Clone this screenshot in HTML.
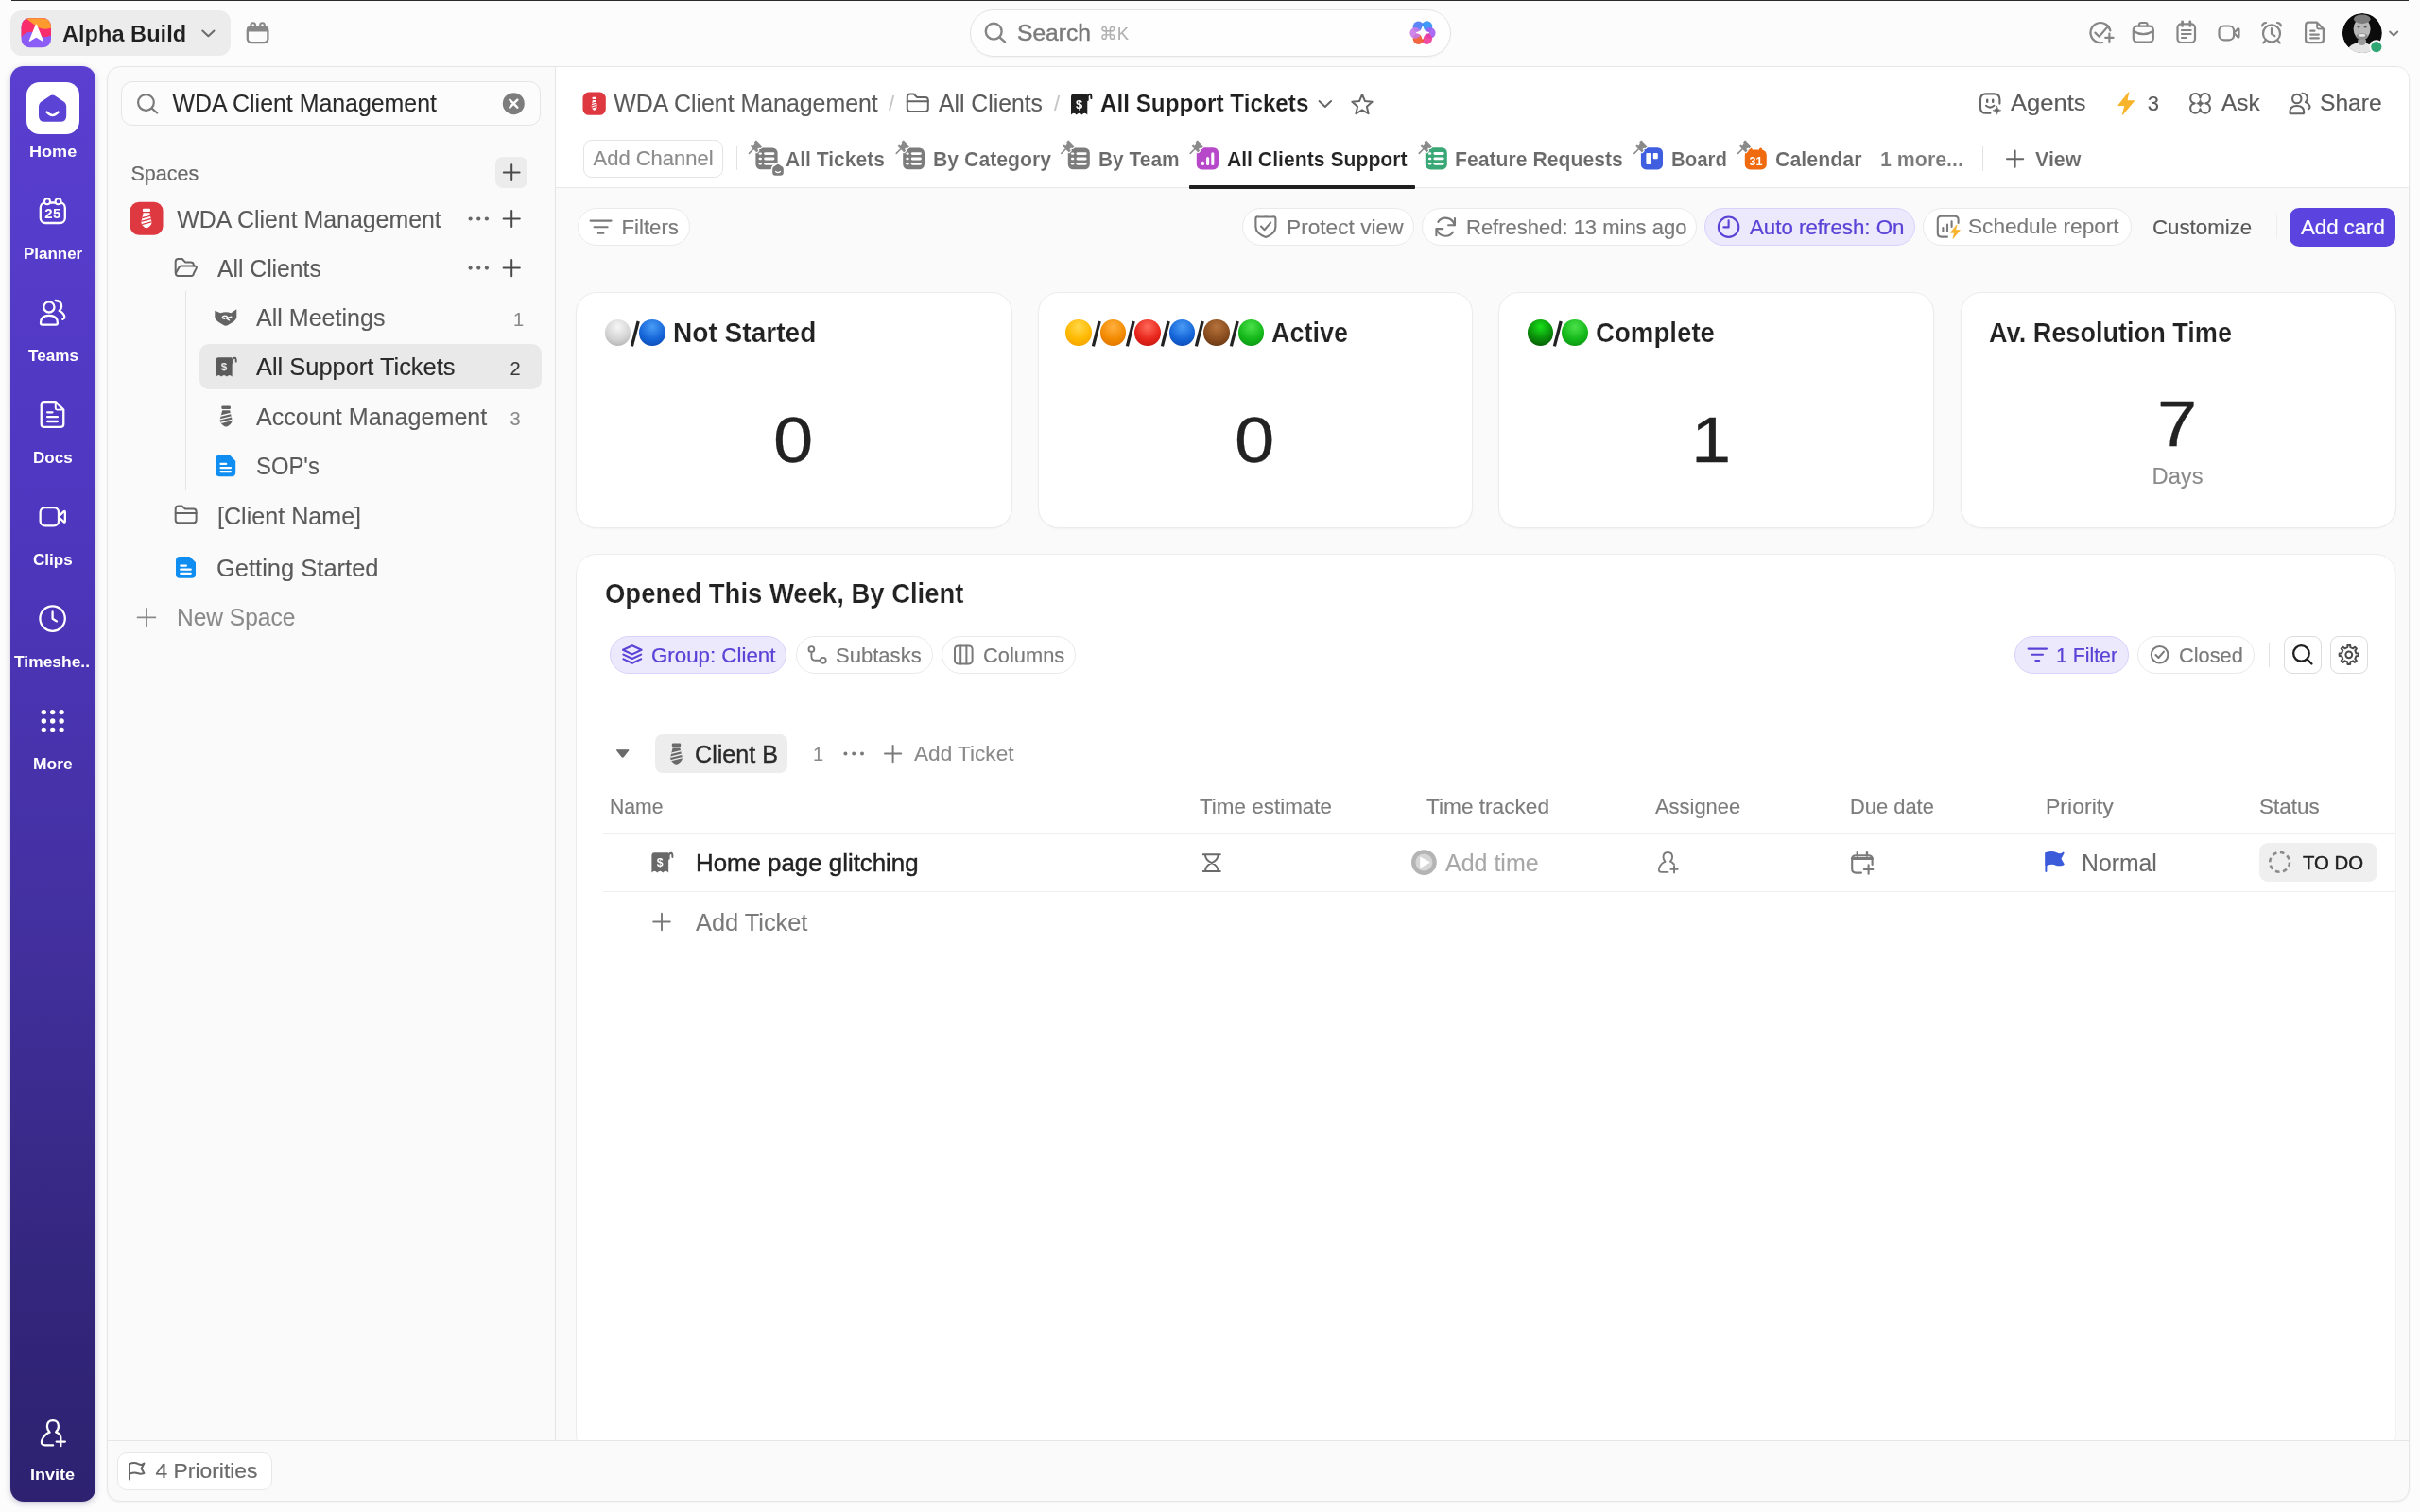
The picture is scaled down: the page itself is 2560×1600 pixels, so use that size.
<!DOCTYPE html><html><head><meta charset="utf-8"><title>ClickUp</title><style>
html,body{margin:0;padding:0;}body{width:2560px;height:1600px;position:relative;overflow:hidden;background:#fcfcfc;font-family:"Liberation Sans", sans-serif;}
.t{font-family:"Liberation Sans", sans-serif;}
</style></head><body><div style="position:absolute;left:0;top:0;width:2560px;height:1600px;will-change:transform;">
<div style="position:absolute;left:12px;top:0px;width:2536px;height:1px;box-sizing:border-box;background:#2a2a2a;"></div>
<div style="position:absolute;left:11px;top:11px;width:233px;height:48px;box-sizing:border-box;background:#ececec;border-radius:12px;"></div>
<div style="position:absolute;left:113px;top:70px;width:2436px;height:1519px;box-sizing:border-box;background:#fafafa;border:1px solid #e6e6e6;border-radius:14px;box-shadow:0 1px 3px rgba(0,0,0,0.05);"></div>
<div style="position:absolute;left:588px;top:71px;width:1960px;height:127px;box-sizing:border-box;background:#ffffff;border-radius:0 13px 0 0;"></div>
<div style="position:absolute;left:588px;top:198px;width:1960px;height:1px;box-sizing:border-box;background:#e9e9e9;"></div>
<div style="position:absolute;left:587px;top:71px;width:1px;height:1453px;box-sizing:border-box;background:#e6e6e6;"></div>
<div style="position:absolute;left:114px;top:1524px;width:2434px;height:1px;box-sizing:border-box;background:#e6e6e6;"></div>
<div style="position:absolute;left:11px;top:70px;width:90px;height:1519px;box-sizing:border-box;background:linear-gradient(180deg,#5a3fd0 0%,#4f37c0 30%,#43309f 60%,#33267c 85%,#2d2170 100%);border-radius:14px;box-shadow:0 2px 6px rgba(40,30,100,0.25);"></div>
<div style="position:absolute;left:28px;top:87px;width:56px;height:55px;box-sizing:border-box;background:#ffffff;border-radius:14px;"></div>
<span class="t" style="position:absolute;left:30.50px;top:151.76px;font-size:17.3px;line-height:17.3px;color:#ffffff;font-weight:700;white-space:pre;letter-spacing:0.000px;display:inline-block;transform-origin:0 50%;transform:scaleX(1.0450);">Home</span>
<span class="t" style="position:absolute;left:24.60px;top:259.76px;font-size:17.3px;line-height:17.3px;color:#ffffff;font-weight:700;white-space:pre;letter-spacing:0.000px;display:inline-block;transform-origin:0 50%;transform:scaleX(0.9812);">Planner</span>
<span class="t" style="position:absolute;left:29.60px;top:367.76px;font-size:17.3px;line-height:17.3px;color:#ffffff;font-weight:700;white-space:pre;letter-spacing:0.000px;display:inline-block;transform-origin:0 50%;transform:scaleX(0.9891);">Teams</span>
<span class="t" style="position:absolute;left:35.00px;top:475.76px;font-size:17.3px;line-height:17.3px;color:#ffffff;font-weight:700;white-space:pre;letter-spacing:0.000px;display:inline-block;transform-origin:0 50%;transform:scaleX(0.9866);">Docs</span>
<span class="t" style="position:absolute;left:35.00px;top:583.76px;font-size:17.3px;line-height:17.3px;color:#ffffff;font-weight:700;white-space:pre;letter-spacing:0.000px;display:inline-block;transform-origin:0 50%;transform:scaleX(0.9870);">Clips</span>
<span class="t" style="position:absolute;left:15.00px;top:691.76px;font-size:17.3px;line-height:17.3px;color:#ffffff;font-weight:700;white-space:pre;letter-spacing:0.000px;display:inline-block;transform-origin:0 50%;transform:scaleX(1.0075);">Timeshe..</span>
<span class="t" style="position:absolute;left:35.00px;top:799.76px;font-size:17.3px;line-height:17.3px;color:#ffffff;font-weight:700;white-space:pre;letter-spacing:0.000px;display:inline-block;transform-origin:0 50%;transform:scaleX(1.0098);">More</span>
<span class="t" style="position:absolute;left:31.70px;top:1552.16px;font-size:17.3px;line-height:17.3px;color:#ffffff;font-weight:700;white-space:pre;letter-spacing:0.000px;display:inline-block;transform-origin:0 50%;transform:scaleX(1.0450);">Invite</span>
<span class="t" style="position:absolute;left:65.60px;top:23.58px;font-size:24.6px;line-height:24.6px;color:#1f1f1f;font-weight:700;white-space:pre;letter-spacing:0.000px;display:inline-block;transform-origin:0 50%;transform:scaleX(0.9596);-webkit-text-stroke:0.12px #ececec;">Alpha Build</span>
<div style="position:absolute;left:1026px;top:10px;width:509px;height:50px;box-sizing:border-box;background:#fefefe;border:1px solid #e3e3e3;border-radius:25px;box-shadow:0 1px 2px rgba(0,0,0,0.04);"></div>
<span class="t" style="position:absolute;left:1076.00px;top:22.56px;font-size:24.62px;line-height:24.62px;color:#7a7a7a;font-weight:400;white-space:pre;letter-spacing:0.000px;-webkit-text-stroke:0.45px #7a7a7a;">Search</span>
<span class="t" style="position:absolute;left:1163.00px;top:27.06px;font-size:18.59px;line-height:18.59px;color:#b0b0b0;font-weight:400;white-space:pre;letter-spacing:0.000px;display:inline-block;transform-origin:0 50%;transform:scaleX(0.9871);-webkit-text-stroke:0.1px #b0b0b0;">⌘K</span>
<div style="position:absolute;left:128px;top:86px;width:444px;height:47px;box-sizing:border-box;background:#fcfcfc;border:1px solid #e5e5e5;border-radius:12px;"></div>
<span class="t" style="position:absolute;left:182.50px;top:97.32px;font-size:24.9px;line-height:24.9px;color:#2a2a2a;font-weight:400;white-space:pre;letter-spacing:0.000px;-webkit-text-stroke:0.1px #2a2a2a;">WDA Client Management</span>
<span class="t" style="position:absolute;left:138.40px;top:172.96px;font-size:21.55px;line-height:21.55px;color:#686868;font-weight:400;white-space:pre;letter-spacing:0.000px;-webkit-text-stroke:0.18px #686868;">Spaces</span>
<div style="position:absolute;left:524px;top:166px;width:34px;height:33px;box-sizing:border-box;background:#ececec;border-radius:8px;"></div>
<span class="t" style="position:absolute;left:187.30px;top:219.52px;font-size:24.9px;line-height:24.9px;color:#5a5a5a;font-weight:400;white-space:pre;letter-spacing:0.000px;-webkit-text-stroke:0.1px #5a5a5a;">WDA Client Management</span>
<span class="t" style="position:absolute;left:229.60px;top:271.72px;font-size:24.9px;line-height:24.9px;color:#5a5a5a;font-weight:400;white-space:pre;letter-spacing:0.000px;display:inline-block;transform-origin:0 50%;transform:scaleX(0.9921);-webkit-text-stroke:0.1px #5a5a5a;">All Clients</span>
<div style="position:absolute;left:155px;top:251px;width:1px;height:377px;box-sizing:border-box;background:#e4e4e4;"></div>
<div style="position:absolute;left:196px;top:308px;width:1px;height:211px;box-sizing:border-box;background:#e4e4e4;"></div>
<span class="t" style="position:absolute;left:271.00px;top:324.12px;font-size:24.9px;line-height:24.9px;color:#5a5a5a;font-weight:400;white-space:pre;letter-spacing:0.000px;display:inline-block;transform-origin:0 50%;transform:scaleX(1.0061);-webkit-text-stroke:0.1px #5a5a5a;">All Meetings</span>
<span class="t" style="position:absolute;left:543.00px;top:328.07px;font-size:20px;line-height:20px;color:#8a8a8a;font-weight:400;white-space:pre;letter-spacing:0.000px;-webkit-text-stroke:0.1px #8a8a8a;">1</span>
<div style="position:absolute;left:211px;top:364px;width:362px;height:48px;box-sizing:border-box;background:#e9e9e9;border-radius:10px;"></div>
<span class="t" style="position:absolute;left:271.00px;top:375.92px;font-size:24.9px;line-height:24.9px;color:#2a2a2a;font-weight:400;white-space:pre;letter-spacing:0.000px;display:inline-block;transform-origin:0 50%;transform:scaleX(1.0211);-webkit-text-stroke:0.15px #2a2a2a;">All Support Tickets</span>
<span class="t" style="position:absolute;left:539.60px;top:379.87px;font-size:20px;line-height:20px;color:#3a3a3a;font-weight:400;white-space:pre;letter-spacing:0.000px;-webkit-text-stroke:0.1px #3a3a3a;">2</span>
<span class="t" style="position:absolute;left:271.00px;top:429.12px;font-size:24.9px;line-height:24.9px;color:#5a5a5a;font-weight:400;white-space:pre;letter-spacing:0.000px;display:inline-block;transform-origin:0 50%;transform:scaleX(1.0089);-webkit-text-stroke:0.1px #5a5a5a;">Account Management</span>
<span class="t" style="position:absolute;left:539.60px;top:433.07px;font-size:20px;line-height:20px;color:#8a8a8a;font-weight:400;white-space:pre;letter-spacing:0.000px;-webkit-text-stroke:0.1px #8a8a8a;">3</span>
<span class="t" style="position:absolute;left:271.00px;top:481.22px;font-size:24.9px;line-height:24.9px;color:#5a5a5a;font-weight:400;white-space:pre;letter-spacing:0.000px;display:inline-block;transform-origin:0 50%;transform:scaleX(0.9575);-webkit-text-stroke:0.1px #5a5a5a;">SOP&#x27;s</span>
<span class="t" style="position:absolute;left:229.60px;top:533.52px;font-size:24.9px;line-height:24.9px;color:#5a5a5a;font-weight:400;white-space:pre;letter-spacing:0.000px;display:inline-block;transform-origin:0 50%;transform:scaleX(1.0087);-webkit-text-stroke:0.1px #5a5a5a;">[Client Name]</span>
<span class="t" style="position:absolute;left:228.80px;top:589.12px;font-size:24.9px;line-height:24.9px;color:#5a5a5a;font-weight:400;white-space:pre;letter-spacing:0.000px;display:inline-block;transform-origin:0 50%;transform:scaleX(1.0244);-webkit-text-stroke:0.1px #5a5a5a;">Getting Started</span>
<span class="t" style="position:absolute;left:187.30px;top:641.12px;font-size:24.9px;line-height:24.9px;color:#8a8a8a;font-weight:400;white-space:pre;letter-spacing:0.000px;display:inline-block;transform-origin:0 50%;transform:scaleX(0.9851);-webkit-text-stroke:0.1px #8a8a8a;">New Space</span>
<div style="position:absolute;left:124px;top:1537px;width:164px;height:40px;box-sizing:border-box;background:#ffffff;border:1px solid #e8e8e8;border-radius:10px;"></div>
<span class="t" style="position:absolute;left:164.50px;top:1544.85px;font-size:22.86px;line-height:22.86px;color:#6a6a6a;font-weight:400;white-space:pre;letter-spacing:0.000px;-webkit-text-stroke:0.18px #6a6a6a;">4 Priorities</span>
<span class="t" style="position:absolute;left:649.30px;top:97.02px;font-size:24.9px;line-height:24.9px;color:#5a5a5a;font-weight:400;white-space:pre;letter-spacing:0.000px;-webkit-text-stroke:0.1px #5a5a5a;">WDA Client Management</span>
<span class="t" style="position:absolute;left:940.00px;top:99.48px;font-size:22px;line-height:22px;color:#c4c4c4;font-weight:400;white-space:pre;letter-spacing:0.000px;-webkit-text-stroke:0.1px #c4c4c4;">/</span>
<span class="t" style="position:absolute;left:993.00px;top:97.02px;font-size:24.9px;line-height:24.9px;color:#5a5a5a;font-weight:400;white-space:pre;letter-spacing:0.000px;display:inline-block;transform-origin:0 50%;transform:scaleX(0.9939);-webkit-text-stroke:0.1px #5a5a5a;">All Clients</span>
<span class="t" style="position:absolute;left:1115.00px;top:99.48px;font-size:22px;line-height:22px;color:#c4c4c4;font-weight:400;white-space:pre;letter-spacing:0.000px;-webkit-text-stroke:0.1px #c4c4c4;">/</span>
<span class="t" style="position:absolute;left:1164.00px;top:97.02px;font-size:24.9px;line-height:24.9px;color:#1f1f1f;font-weight:700;white-space:pre;letter-spacing:0.000px;display:inline-block;transform-origin:0 50%;transform:scaleX(0.9736);-webkit-text-stroke:0.14px #ffffff;">All Support Tickets</span>
<span class="t" style="position:absolute;left:2127.30px;top:97.11px;font-size:24.8px;line-height:24.8px;color:#5a5a5a;font-weight:400;white-space:pre;letter-spacing:0.000px;display:inline-block;transform-origin:0 50%;transform:scaleX(1.0310);-webkit-text-stroke:0.18px #5a5a5a;">Agents</span>
<span class="t" style="position:absolute;left:2271.70px;top:99.48px;font-size:22px;line-height:22px;color:#5a5a5a;font-weight:400;white-space:pre;letter-spacing:0.000px;-webkit-text-stroke:0.18px #5a5a5a;">3</span>
<span class="t" style="position:absolute;left:2349.70px;top:97.11px;font-size:24.8px;line-height:24.8px;color:#5a5a5a;font-weight:400;white-space:pre;letter-spacing:0.000px;display:inline-block;transform-origin:0 50%;transform:scaleX(0.9820);-webkit-text-stroke:0.18px #5a5a5a;">Ask</span>
<span class="t" style="position:absolute;left:2454.00px;top:97.11px;font-size:24.8px;line-height:24.8px;color:#5a5a5a;font-weight:400;white-space:pre;letter-spacing:0.000px;display:inline-block;transform-origin:0 50%;transform:scaleX(0.9929);-webkit-text-stroke:0.18px #5a5a5a;">Share</span>
<div style="position:absolute;left:617px;top:147.6px;width:148px;height:40.70000000000002px;box-sizing:border-box;background:#ffffff;border:1px solid #e4e4e4;border-radius:9px;"></div>
<span class="t" style="position:absolute;left:627.60px;top:157.21px;font-size:21.96px;line-height:21.96px;color:#8c8c8c;font-weight:400;white-space:pre;letter-spacing:0.000px;-webkit-text-stroke:0.18px #8c8c8c;">Add Channel</span>
<div style="position:absolute;left:779px;top:155px;width:1px;height:25px;box-sizing:border-box;background:#e2e2e2;"></div>
<span class="t" style="position:absolute;left:831.30px;top:157.85px;font-size:21.2px;line-height:21.2px;color:#6a6a6a;font-weight:700;white-space:pre;letter-spacing:0.000px;display:inline-block;transform-origin:0 50%;transform:scaleX(0.9942);-webkit-text-stroke:0.14px #ffffff;">All Tickets</span>
<span class="t" style="position:absolute;left:986.60px;top:157.85px;font-size:21.2px;line-height:21.2px;color:#6a6a6a;font-weight:700;white-space:pre;letter-spacing:0.000px;display:inline-block;transform-origin:0 50%;transform:scaleX(1.0023);-webkit-text-stroke:0.14px #ffffff;">By Category</span>
<span class="t" style="position:absolute;left:1162.00px;top:157.85px;font-size:21.2px;line-height:21.2px;color:#6a6a6a;font-weight:700;white-space:pre;letter-spacing:0.000px;display:inline-block;transform-origin:0 50%;transform:scaleX(0.9867);-webkit-text-stroke:0.14px #ffffff;">By Team</span>
<span class="t" style="position:absolute;left:1297.90px;top:157.85px;font-size:21.2px;line-height:21.2px;color:#232323;font-weight:700;white-space:pre;letter-spacing:0.000px;-webkit-text-stroke:0.14px #ffffff;">All Clients Support</span>
<div style="position:absolute;left:1258px;top:196px;width:239px;height:4px;box-sizing:border-box;background:#1f1f1f;border-radius:1px;"></div>
<span class="t" style="position:absolute;left:1539.00px;top:157.85px;font-size:21.2px;line-height:21.2px;color:#6a6a6a;font-weight:700;white-space:pre;letter-spacing:0.000px;-webkit-text-stroke:0.14px #ffffff;">Feature Requests</span>
<span class="t" style="position:absolute;left:1768.00px;top:157.85px;font-size:21.2px;line-height:21.2px;color:#6a6a6a;font-weight:700;white-space:pre;letter-spacing:0.000px;display:inline-block;transform-origin:0 50%;transform:scaleX(0.9638);-webkit-text-stroke:0.14px #ffffff;">Board</span>
<span class="t" style="position:absolute;left:1877.50px;top:157.85px;font-size:21.2px;line-height:21.2px;color:#6a6a6a;font-weight:700;white-space:pre;letter-spacing:0.000px;display:inline-block;transform-origin:0 50%;transform:scaleX(1.0091);-webkit-text-stroke:0.14px #ffffff;">Calendar</span>
<span class="t" style="position:absolute;left:1989.00px;top:157.85px;font-size:21.2px;line-height:21.2px;color:#7a7a7a;font-weight:700;white-space:pre;letter-spacing:0.000px;display:inline-block;transform-origin:0 50%;transform:scaleX(1.0087);-webkit-text-stroke:0.14px #ffffff;">1 more...</span>
<div style="position:absolute;left:2097px;top:155px;width:1px;height:26px;box-sizing:border-box;background:#e2e2e2;"></div>
<span class="t" style="position:absolute;left:2153.30px;top:157.85px;font-size:21.2px;line-height:21.2px;color:#6a6a6a;font-weight:700;white-space:pre;letter-spacing:0.000px;display:inline-block;transform-origin:0 50%;transform:scaleX(1.0103);-webkit-text-stroke:0.14px #ffffff;">View</span>
<div style="position:absolute;left:611px;top:220px;width:119px;height:40px;box-sizing:border-box;background:#ffffff;border:1.5px solid #eaeaea;border-radius:20px;"></div>
<span class="t" style="position:absolute;left:657.50px;top:229.81px;font-size:22.2px;line-height:22.2px;color:#7a7a7a;font-weight:400;white-space:pre;letter-spacing:0.000px;-webkit-text-stroke:0.18px #7a7a7a;">Filters</span>
<div style="position:absolute;left:1314px;top:220px;width:182px;height:40px;box-sizing:border-box;background:#ffffff;border:1.5px solid #eaeaea;border-radius:20px;"></div>
<span class="t" style="position:absolute;left:1360.80px;top:229.81px;font-size:22.2px;line-height:22.2px;color:#7a7a7a;font-weight:400;white-space:pre;letter-spacing:0.000px;display:inline-block;transform-origin:0 50%;transform:scaleX(1.0228);-webkit-text-stroke:0.18px #7a7a7a;">Protect view</span>
<div style="position:absolute;left:1504px;top:220px;width:291px;height:40px;box-sizing:border-box;background:#ffffff;border:1.5px solid #eaeaea;border-radius:20px;"></div>
<span class="t" style="position:absolute;left:1550.50px;top:229.81px;font-size:22.2px;line-height:22.2px;color:#7a7a7a;font-weight:400;white-space:pre;letter-spacing:0.000px;display:inline-block;transform-origin:0 50%;transform:scaleX(0.9908);-webkit-text-stroke:0.18px #7a7a7a;">Refreshed: 13 mins ago</span>
<div style="position:absolute;left:1803px;top:220px;width:223px;height:40px;box-sizing:border-box;background:#ece9fd;border:1.5px solid #d8d2fb;border-radius:20px;"></div>
<span class="t" style="position:absolute;left:1850.60px;top:229.81px;font-size:22.2px;line-height:22.2px;color:#5a42d6;font-weight:400;white-space:pre;letter-spacing:0.000px;display:inline-block;transform-origin:0 50%;transform:scaleX(1.0037);-webkit-text-stroke:0.24px #5a42d6;">Auto refresh: On</span>
<div style="position:absolute;left:2034px;top:220px;width:221px;height:40px;box-sizing:border-box;background:#ffffff;border:1.5px solid #eaeaea;border-radius:20px;"></div>
<span class="t" style="position:absolute;left:2082.40px;top:229.21px;font-size:22.2px;line-height:22.2px;color:#7a7a7a;font-weight:400;white-space:pre;letter-spacing:0.000px;display:inline-block;transform-origin:0 50%;transform:scaleX(1.0188);-webkit-text-stroke:0.18px #7a7a7a;">Schedule report</span>
<span class="t" style="position:absolute;left:2276.60px;top:229.81px;font-size:22.2px;line-height:22.2px;color:#5a5a5a;font-weight:400;white-space:pre;letter-spacing:0.000px;display:inline-block;transform-origin:0 50%;transform:scaleX(1.0037);-webkit-text-stroke:0.18px #5a5a5a;">Customize</span>
<div style="position:absolute;left:2408px;top:228px;width:1px;height:25px;box-sizing:border-box;background:#eeeeee;"></div>
<div style="position:absolute;left:2422px;top:220px;width:112px;height:41px;box-sizing:border-box;background:#5b43e0;border-radius:10px;"></div>
<span class="t" style="position:absolute;left:2434.00px;top:229.81px;font-size:22.2px;line-height:22.2px;color:#ffffff;font-weight:400;white-space:pre;letter-spacing:0.000px;-webkit-text-stroke:0.21px #ffffff;">Add card</span>
<div style="position:absolute;left:609px;top:309px;width:462px;height:250px;box-sizing:border-box;background:#ffffff;border:1px solid #ececec;border-radius:22px;box-shadow:0 1px 2px rgba(0,0,0,0.035);"></div>
<div style="position:absolute;left:1097.7px;top:309px;width:460.29999999999995px;height:250px;box-sizing:border-box;background:#ffffff;border:1px solid #ececec;border-radius:22px;box-shadow:0 1px 2px rgba(0,0,0,0.035);"></div>
<div style="position:absolute;left:1585px;top:309px;width:461px;height:250px;box-sizing:border-box;background:#ffffff;border:1px solid #ececec;border-radius:22px;box-shadow:0 1px 2px rgba(0,0,0,0.035);"></div>
<div style="position:absolute;left:2073.5px;top:309px;width:461.0px;height:250px;box-sizing:border-box;background:#ffffff;border:1px solid #ececec;border-radius:22px;box-shadow:0 1px 2px rgba(0,0,0,0.035);"></div>
<div style="position:absolute;left:639.6px;top:338px;width:27.5px;height:27.5px;border-radius:50%;background:radial-gradient(circle at 50% 28%,#f6f6f6 0%,#d4d4d4 55%,#a8a8a8 100%);"></div>
<svg style="position:absolute;left:665.1px;top:336px" width="14" height="34" viewBox="0 0 14 34"><path d="M3.4 30.4L10.2 4" stroke="#222" stroke-width="3.3" fill="none"/></svg>
<div style="position:absolute;left:676.0500000000001px;top:338px;width:27.5px;height:27.5px;border-radius:50%;background:radial-gradient(circle at 50% 28%,#4a9cf5 0%,#1565d8 55%,#0a45a8 100%);"></div>
<span class="t" style="position:absolute;left:711.50px;top:337.85px;font-size:29.0px;line-height:29.0px;color:#222222;font-weight:700;white-space:pre;letter-spacing:0.000px;display:inline-block;transform-origin:0 50%;transform:scaleX(0.9687);-webkit-text-stroke:0.2px #ffffff;">Not Started</span>
<div style="position:absolute;left:1127.4px;top:338px;width:27.5px;height:27.5px;border-radius:50%;background:radial-gradient(circle at 50% 28%,#ffd84a 0%,#ffb800 55%,#f09a00 100%);"></div>
<svg style="position:absolute;left:1152.9px;top:336px" width="14" height="34" viewBox="0 0 14 34"><path d="M3.4 30.4L10.2 4" stroke="#222" stroke-width="3.3" fill="none"/></svg>
<div style="position:absolute;left:1163.8500000000001px;top:338px;width:27.5px;height:27.5px;border-radius:50%;background:radial-gradient(circle at 50% 28%,#ffb040 0%,#f28a00 55%,#d96c00 100%);"></div>
<svg style="position:absolute;left:1189.3500000000001px;top:336px" width="14" height="34" viewBox="0 0 14 34"><path d="M3.4 30.4L10.2 4" stroke="#222" stroke-width="3.3" fill="none"/></svg>
<div style="position:absolute;left:1200.3000000000002px;top:338px;width:27.5px;height:27.5px;border-radius:50%;background:radial-gradient(circle at 50% 28%,#ff6a5a 0%,#e8261c 55%,#b81410 100%);"></div>
<svg style="position:absolute;left:1225.8000000000002px;top:336px" width="14" height="34" viewBox="0 0 14 34"><path d="M3.4 30.4L10.2 4" stroke="#222" stroke-width="3.3" fill="none"/></svg>
<div style="position:absolute;left:1236.75px;top:338px;width:27.5px;height:27.5px;border-radius:50%;background:radial-gradient(circle at 50% 28%,#4a9cf5 0%,#1565d8 55%,#0a45a8 100%);"></div>
<svg style="position:absolute;left:1262.25px;top:336px" width="14" height="34" viewBox="0 0 14 34"><path d="M3.4 30.4L10.2 4" stroke="#222" stroke-width="3.3" fill="none"/></svg>
<div style="position:absolute;left:1273.2px;top:338px;width:27.5px;height:27.5px;border-radius:50%;background:radial-gradient(circle at 50% 28%,#b5723c 0%,#8a4d1e 55%,#5c3010 100%);"></div>
<svg style="position:absolute;left:1298.7px;top:336px" width="14" height="34" viewBox="0 0 14 34"><path d="M3.4 30.4L10.2 4" stroke="#222" stroke-width="3.3" fill="none"/></svg>
<div style="position:absolute;left:1309.65px;top:338px;width:27.5px;height:27.5px;border-radius:50%;background:radial-gradient(circle at 50% 28%,#4be04a 0%,#14b81a 55%,#0a8a12 100%);"></div>
<span class="t" style="position:absolute;left:1345.00px;top:337.85px;font-size:29.0px;line-height:29.0px;color:#222222;font-weight:700;white-space:pre;letter-spacing:0.000px;display:inline-block;transform-origin:0 50%;transform:scaleX(0.9305);-webkit-text-stroke:0.2px #ffffff;">Active</span>
<div style="position:absolute;left:1615.6px;top:338px;width:27.5px;height:27.5px;border-radius:50%;background:radial-gradient(circle at 50% 28%,#18e018 0%,#0a8a0a 55%,#044a04 100%);"></div>
<svg style="position:absolute;left:1641.1px;top:336px" width="14" height="34" viewBox="0 0 14 34"><path d="M3.4 30.4L10.2 4" stroke="#222" stroke-width="3.3" fill="none"/></svg>
<div style="position:absolute;left:1652.05px;top:338px;width:27.5px;height:27.5px;border-radius:50%;background:radial-gradient(circle at 50% 28%,#4be04a 0%,#14b81a 55%,#0a8a12 100%);"></div>
<span class="t" style="position:absolute;left:1687.80px;top:337.85px;font-size:29.0px;line-height:29.0px;color:#222222;font-weight:700;white-space:pre;letter-spacing:0.000px;display:inline-block;transform-origin:0 50%;transform:scaleX(0.9535);-webkit-text-stroke:0.2px #ffffff;">Complete</span>
<span class="t" style="position:absolute;left:2104.00px;top:337.85px;font-size:29.0px;line-height:29.0px;color:#222222;font-weight:700;white-space:pre;letter-spacing:0.000px;display:inline-block;transform-origin:0 50%;transform:scaleX(0.9345);-webkit-text-stroke:0.2px #ffffff;">Av. Resolution Time</span>
<span class="t" style="position:absolute;left:818.49px;top:430.69px;font-size:69px;line-height:69px;color:#222222;font-weight:400;white-space:pre;letter-spacing:0.000px;display:inline-block;transform-origin:0 50%;transform:scaleX(1.1000);-webkit-text-stroke:0.3px #222222;">0</span>
<span class="t" style="position:absolute;left:1306.49px;top:430.69px;font-size:69px;line-height:69px;color:#222222;font-weight:400;white-space:pre;letter-spacing:0.000px;display:inline-block;transform-origin:0 50%;transform:scaleX(1.1000);-webkit-text-stroke:0.3px #222222;">0</span>
<span class="t" style="position:absolute;left:1789.09px;top:430.69px;font-size:69px;line-height:69px;color:#222222;font-weight:400;white-space:pre;letter-spacing:0.000px;display:inline-block;transform-origin:0 50%;transform:scaleX(1.1000);-webkit-text-stroke:0.3px #222222;">1</span>
<span class="t" style="position:absolute;left:2282.29px;top:414.19px;font-size:69px;line-height:69px;color:#222222;font-weight:400;white-space:pre;letter-spacing:0.000px;display:inline-block;transform-origin:0 50%;transform:scaleX(1.1000);-webkit-text-stroke:0.3px #222222;">7</span>
<span class="t" style="position:absolute;left:2276.50px;top:493.00px;font-size:23.74px;line-height:23.74px;color:#8a8a8a;font-weight:400;white-space:pre;letter-spacing:0.000px;-webkit-text-stroke:0.1px #8a8a8a;">Days</span>
<div style="position:absolute;left:609px;top:586px;width:1925.5px;height:954px;box-sizing:border-box;background:#ffffff;border:1px solid #ececec;border-radius:22px;clip-path:inset(0 0 16px 0);"></div>
<span class="t" style="position:absolute;left:640.00px;top:614.25px;font-size:29.0px;line-height:29.0px;color:#222222;font-weight:700;white-space:pre;letter-spacing:0.000px;display:inline-block;transform-origin:0 50%;transform:scaleX(0.9468);-webkit-text-stroke:0.2px #ffffff;">Opened This Week, By Client</span>
<div style="position:absolute;left:645px;top:673px;width:187px;height:40px;box-sizing:border-box;background:#ece9fd;border:1.5px solid #d8d2fb;border-radius:20px;"></div>
<span class="t" style="position:absolute;left:688.60px;top:682.91px;font-size:22.2px;line-height:22.2px;color:#5a42d6;font-weight:400;white-space:pre;letter-spacing:0.000px;display:inline-block;transform-origin:0 50%;transform:scaleX(1.0051);-webkit-text-stroke:0.24px #5a42d6;">Group: Client</span>
<div style="position:absolute;left:841.5px;top:673px;width:145.5px;height:40px;box-sizing:border-box;background:#ffffff;border:1.5px solid #eaeaea;border-radius:20px;"></div>
<span class="t" style="position:absolute;left:884.30px;top:682.91px;font-size:22.2px;line-height:22.2px;color:#7a7a7a;font-weight:400;white-space:pre;letter-spacing:0.000px;display:inline-block;transform-origin:0 50%;transform:scaleX(0.9938);-webkit-text-stroke:0.18px #7a7a7a;">Subtasks</span>
<div style="position:absolute;left:996px;top:673px;width:142px;height:40px;box-sizing:border-box;background:#ffffff;border:1.5px solid #eaeaea;border-radius:20px;"></div>
<span class="t" style="position:absolute;left:1039.60px;top:682.91px;font-size:22.2px;line-height:22.2px;color:#7a7a7a;font-weight:400;white-space:pre;letter-spacing:0.000px;display:inline-block;transform-origin:0 50%;transform:scaleX(0.9856);-webkit-text-stroke:0.18px #7a7a7a;">Columns</span>
<div style="position:absolute;left:2131.4px;top:673px;width:120.59999999999991px;height:40px;box-sizing:border-box;background:#ece9fd;border:1.5px solid #d8d2fb;border-radius:20px;"></div>
<span class="t" style="position:absolute;left:2175.00px;top:682.91px;font-size:22.2px;line-height:22.2px;color:#5a42d6;font-weight:400;white-space:pre;letter-spacing:0.000px;display:inline-block;transform-origin:0 50%;transform:scaleX(0.9585);-webkit-text-stroke:0.24px #5a42d6;">1 Filter</span>
<div style="position:absolute;left:2261.3px;top:673px;width:123.69999999999982px;height:40px;box-sizing:border-box;background:#ffffff;border:1.5px solid #eaeaea;border-radius:20px;"></div>
<span class="t" style="position:absolute;left:2304.80px;top:682.91px;font-size:22.2px;line-height:22.2px;color:#7a7a7a;font-weight:400;white-space:pre;letter-spacing:0.000px;display:inline-block;transform-origin:0 50%;transform:scaleX(0.9815);-webkit-text-stroke:0.18px #7a7a7a;">Closed</span>
<div style="position:absolute;left:2400px;top:680px;width:1px;height:26px;box-sizing:border-box;background:#e2e2e2;"></div>
<div style="position:absolute;left:2416px;top:673px;width:40px;height:40px;box-sizing:border-box;background:#ffffff;border:1px solid #dcdcdc;border-radius:9px;"></div>
<div style="position:absolute;left:2464.5px;top:673px;width:40.5px;height:40px;box-sizing:border-box;background:#ffffff;border:1px solid #dcdcdc;border-radius:9px;"></div>
<div style="position:absolute;left:693px;top:777px;width:140px;height:41px;box-sizing:border-box;background:#ededed;border-radius:8px;"></div>
<span class="t" style="position:absolute;left:734.60px;top:785.54px;font-size:25.0px;line-height:25.0px;color:#2a2a2a;font-weight:400;white-space:pre;letter-spacing:0.000px;display:inline-block;transform-origin:0 50%;transform:scaleX(1.0052);-webkit-text-stroke:0.4px #2a2a2a;">Client B</span>
<span class="t" style="position:absolute;left:860.00px;top:788.47px;font-size:20px;line-height:20px;color:#8a8a8a;font-weight:400;white-space:pre;letter-spacing:0.000px;-webkit-text-stroke:0.1px #8a8a8a;">1</span>
<span class="t" style="position:absolute;left:967.00px;top:787.24px;font-size:22.4px;line-height:22.4px;color:#8a8a8a;font-weight:400;white-space:pre;letter-spacing:0.000px;display:inline-block;transform-origin:0 50%;transform:scaleX(1.0091);-webkit-text-stroke:0.12px #8a8a8a;">Add Ticket</span>
<span class="t" style="position:absolute;left:645.30px;top:842.81px;font-size:22.2px;line-height:22.2px;color:#7c7c7c;font-weight:400;white-space:pre;letter-spacing:0.000px;display:inline-block;transform-origin:0 50%;transform:scaleX(0.9550);-webkit-text-stroke:0.15px #7c7c7c;">Name</span>
<span class="t" style="position:absolute;left:1269.00px;top:842.81px;font-size:22.2px;line-height:22.2px;color:#7c7c7c;font-weight:400;white-space:pre;letter-spacing:0.000px;display:inline-block;transform-origin:0 50%;transform:scaleX(1.0108);-webkit-text-stroke:0.15px #7c7c7c;">Time estimate</span>
<span class="t" style="position:absolute;left:1509.00px;top:842.81px;font-size:22.2px;line-height:22.2px;color:#7c7c7c;font-weight:400;white-space:pre;letter-spacing:0.000px;display:inline-block;transform-origin:0 50%;transform:scaleX(1.0204);-webkit-text-stroke:0.15px #7c7c7c;">Time tracked</span>
<span class="t" style="position:absolute;left:1751.30px;top:842.81px;font-size:22.2px;line-height:22.2px;color:#7c7c7c;font-weight:400;white-space:pre;letter-spacing:0.000px;display:inline-block;transform-origin:0 50%;transform:scaleX(0.9882);-webkit-text-stroke:0.15px #7c7c7c;">Assignee</span>
<span class="t" style="position:absolute;left:1956.50px;top:842.81px;font-size:22.2px;line-height:22.2px;color:#7c7c7c;font-weight:400;white-space:pre;letter-spacing:0.000px;display:inline-block;transform-origin:0 50%;transform:scaleX(0.9871);-webkit-text-stroke:0.15px #7c7c7c;">Due date</span>
<span class="t" style="position:absolute;left:2163.70px;top:842.81px;font-size:22.2px;line-height:22.2px;color:#7c7c7c;font-weight:400;white-space:pre;letter-spacing:0.000px;display:inline-block;transform-origin:0 50%;transform:scaleX(1.0384);-webkit-text-stroke:0.15px #7c7c7c;">Priority</span>
<span class="t" style="position:absolute;left:2390.00px;top:842.81px;font-size:22.2px;line-height:22.2px;color:#7c7c7c;font-weight:400;white-space:pre;letter-spacing:0.000px;display:inline-block;transform-origin:0 50%;transform:scaleX(1.0110);-webkit-text-stroke:0.15px #7c7c7c;">Status</span>
<div style="position:absolute;left:638px;top:881.5px;width:1896px;height:1.0px;box-sizing:border-box;background:#efefef;"></div>
<div style="position:absolute;left:638px;top:942.6px;width:1896px;height:1.0px;box-sizing:border-box;background:#efefef;"></div>
<span class="t" style="position:absolute;left:736.00px;top:901.34px;font-size:25.0px;line-height:25.0px;color:#222222;font-weight:400;white-space:pre;letter-spacing:0.000px;display:inline-block;transform-origin:0 50%;transform:scaleX(1.0337);-webkit-text-stroke:0.42px #222222;">Home page glitching</span>
<span class="t" style="position:absolute;left:1529.00px;top:900.54px;font-size:25.0px;line-height:25.0px;color:#a8a8a8;font-weight:400;white-space:pre;letter-spacing:0.000px;-webkit-text-stroke:0.1px #a8a8a8;">Add time</span>
<span class="t" style="position:absolute;left:2202.00px;top:900.54px;font-size:25.0px;line-height:25.0px;color:#6a6a6a;font-weight:400;white-space:pre;letter-spacing:0.000px;display:inline-block;transform-origin:0 50%;transform:scaleX(0.9903);-webkit-text-stroke:0.1px #6a6a6a;">Normal</span>
<div style="position:absolute;left:2389.5px;top:892px;width:125.0px;height:41px;box-sizing:border-box;background:#efefef;border-radius:9px;"></div>
<span class="t" style="position:absolute;left:2436.00px;top:903.49px;font-size:20.33px;line-height:20.33px;color:#222222;font-weight:400;white-space:pre;letter-spacing:0.000px;-webkit-text-stroke:0.45px #222222;">TO DO</span>
<span class="t" style="position:absolute;left:736.00px;top:964.04px;font-size:25.0px;line-height:25.0px;color:#7a7a7a;font-weight:400;white-space:pre;letter-spacing:0.000px;display:inline-block;transform-origin:0 50%;transform:scaleX(1.0143);-webkit-text-stroke:0.1px #7a7a7a;">Add Ticket</span>
<svg style="position:absolute;left:0;top:0" width="2560" height="1600" viewBox="0 0 2560 1600"><defs><clipPath id="logoclip"><rect x="22.6" y="19.3" width="31.4" height="31" rx="8.5"/></clipPath></defs><g clip-path="url(#logoclip)"><rect x="22.00" y="19.00" width="33.00" height="32.00" rx="0" fill="#8b5cf6" /><path d="M22 19H55V37Q46 42 38 36T22 40Z" fill="#f92d6b" /><path d="M27 19H55V29Q46 33 39 28T27 19Z" fill="#ff9a2e" /></g><path d="M38.3 26L45.3 43.2L38.3 39L31.3 43.2Z" fill="#ffffff" stroke="#ffffff" stroke-width="1.2" stroke-linecap="round" stroke-linejoin="round" /><path d="M214.30 32.50L220.40 38.20L226.50 32.50" fill="none" stroke="#6a6a6a" stroke-width="2" stroke-linecap="round" stroke-linejoin="round" /><rect x="261.80" y="28.20" width="21.60" height="17.00" rx="4.2" fill="none" stroke="#888888" stroke-width="2.3" stroke-linejoin="round" /><path d="M262 29.4H283.2V32.6H262Z" fill="#888888" stroke="#888888" stroke-width="1.6" stroke-linecap="round" stroke-linejoin="round" /><path d="M265.4 28V26.6A2.3 2.3 0 0 1 270 26.6V28M275.2 28V26.6A2.3 2.3 0 0 1 279.8 26.6V28" fill="none" stroke="#888888" stroke-width="2.1" stroke-linecap="round" stroke-linejoin="round" /><path d="M55.6 100.4Q56.6 100.4 57.6 101L67 107.2Q70.2 109.2 70.2 113V122.5Q70.2 128.8 64 128.8H47.2Q41 128.8 41 122.5V113Q41 109.2 44.2 107.2L53.6 101Q54.6 100.4 55.6 100.4Z" fill="#5b43d6" /><path d="M49.6 118.6Q55.6 125.2 61.6 118.6" fill="none" stroke="#ffffff" stroke-width="2.5" stroke-linecap="round" stroke-linejoin="round" /><rect x="42.80" y="214.50" width="26.00" height="21.50" rx="5.2" fill="none" stroke="#ffffff" stroke-width="2.3" stroke-linejoin="round" /><circle cx="50.00" cy="213.30" r="3.00" fill="#5840cc" stroke="#ffffff" stroke-width="2" /><circle cx="61.60" cy="213.30" r="3.00" fill="#5840cc" stroke="#ffffff" stroke-width="2" /><text x="55.90" y="231.20" font-family='"Liberation Sans", sans-serif' font-size="15" font-weight="700" fill="#ffffff" text-anchor="middle" letter-spacing="0.3">25</text><g transform="translate(41.70,316.60) scale(1.0000)" ><circle cx="10.20" cy="8.30" r="5.60" fill="none" stroke="#ffffff" stroke-width="2.3" /><path d="M1.3 25.2Q1.3 17.2 10.2 17.2Q19.2 17.2 19.2 25.2Q19.2 27 17.4 27H3.1Q1.3 27 1.3 25.2Z" fill="none" stroke="#ffffff" stroke-width="2.3" stroke-linecap="round" stroke-linejoin="round" /><path d="M17 1.4Q23.2 1.6 23.4 7.6Q23.4 10.6 21 12.4Q24.4 13.4 26.2 17.2Q27.4 20.4 24.6 21.2" fill="none" stroke="#ffffff" stroke-width="2.3" stroke-linecap="round" stroke-linejoin="round" /></g><path d="M46.95 425.15H58.79L67.25 433.60999999999996V448.65000000000003Q67.25 451.85 64.05 451.85H46.95Q43.75 451.85 43.75 448.65000000000003V428.34999999999997Q43.75 425.15 46.95 425.15Z" fill="none" stroke="#ffffff" stroke-width="2.3" stroke-linecap="round" stroke-linejoin="round" /><path d="M58.79 425.65V432.10999999999996Q58.79 433.60999999999996 60.29 433.60999999999996H66.75" fill="none" stroke="#ffffff" stroke-width="1.9549999999999998" stroke-linecap="round" stroke-linejoin="round" /><path d="M50.095 436.364H55.5M50.095 441.17H60.905M50.095 445.976H60.905" fill="none" stroke="#ffffff" stroke-width="2.3" stroke-linecap="round" stroke-linejoin="round" /><rect x="42.65" y="537.15" width="19.37" height="19.30" rx="5" fill="none" stroke="#ffffff" stroke-width="2.3" stroke-linejoin="round" /><path d="M63.519999999999996 545.072L67.64999999999999 541.184Q68.85 540.32 68.85 542.48V551.12Q68.85 553.28 67.64999999999999 552.416L63.519999999999996 548.528" fill="none" stroke="#ffffff" stroke-width="2.3" stroke-linecap="round" stroke-linejoin="round" /><circle cx="55.60" cy="654.60" r="13.20" fill="none" stroke="#ffffff" stroke-width="2.3" /><path d="M55.6 647.5V654.8L60 657.4" fill="none" stroke="#ffffff" stroke-width="2.3" stroke-linecap="round" stroke-linejoin="round" /><circle cx="46.30" cy="753.60" r="2.70" fill="#ffffff" /><circle cx="55.70" cy="753.60" r="2.70" fill="#ffffff" /><circle cx="65.10" cy="753.60" r="2.70" fill="#ffffff" /><circle cx="46.30" cy="763.00" r="2.70" fill="#ffffff" /><circle cx="55.70" cy="763.00" r="2.70" fill="#ffffff" /><circle cx="65.10" cy="763.00" r="2.70" fill="#ffffff" /><circle cx="46.30" cy="772.40" r="2.70" fill="#ffffff" /><circle cx="55.70" cy="772.40" r="2.70" fill="#ffffff" /><circle cx="65.10" cy="772.40" r="2.70" fill="#ffffff" /><g transform="translate(42.50,1502.00) scale(1.0000)" ><path d="M13.4 1.2Q19.4 1.2 19.4 7.6Q19.4 11.2 16.6 13.4Q19.6 14.4 21.6 17" fill="none" stroke="#ffffff" stroke-width="2.3" stroke-linecap="round" stroke-linejoin="round" /><path d="M13.4 1.2Q7.4 1.2 7.4 7.6Q7.4 11.2 10 13.6Q4.6 15.4 2 21.6Q0 27.2 5.4 27.4H13.6" fill="none" stroke="#ffffff" stroke-width="2.3" stroke-linecap="round" stroke-linejoin="round" /><path d="M17.2 23.6H26.4M21.8 19V28.2" fill="none" stroke="#ffffff" stroke-width="2.3" stroke-linecap="round" stroke-linejoin="round" /></g><circle cx="154.45" cy="108.45" r="8.35" fill="none" stroke="#7a7a7a" stroke-width="2.2" /><path d="M160.65 114.65L166.20 119.50" fill="none" stroke="#7a7a7a" stroke-width="2.2" stroke-linecap="round" stroke-linejoin="round" /><circle cx="543.30" cy="109.70" r="11.50" fill="#7d7d7d" /><path d="M539.3 105.7L547.3 113.7M547.3 105.7L539.3 113.7" fill="none" stroke="#ffffff" stroke-width="2.4" stroke-linecap="round" stroke-linejoin="round" /><path d="M532.80 182.60H549.60M541.20 174.20V191.00" fill="none" stroke="#4a4a4a" stroke-width="2" stroke-linecap="round" stroke-linejoin="round" /><rect x="137.60" y="213.80" width="34.90" height="34.90" rx="9.5" fill="#de3841" /><rect x="150.88" y="220.80" width="8.14" height="3.30" rx="1.1329999999999998" fill="#ffffff" /><clipPath id="tie1493_2208"><path d="M151.56 225.33200000000002H158.33999999999997L160.374 234.39600000000002Q161.052 237.28 157.43599999999998 240.16400000000002Q154.95 242.43 152.464 240.16400000000002Q148.848 237.28 149.526 234.39600000000002Z"/></clipPath><path d="M151.56 225.33200000000002H158.33999999999997L160.374 234.39600000000002Q161.052 237.28 157.43599999999998 240.16400000000002Q154.95 242.43 152.464 240.16400000000002Q148.848 237.28 149.526 234.39600000000002Z" fill="#ffffff" /><g clip-path="url(#tie1493_2208)"><path d="M148.3 231.203L161.6 227.701" fill="none" stroke="#de3841" stroke-width="1.2771999999999997" stroke-linecap="round" stroke-linejoin="round" /><path d="M148.3 234.602L161.6 231.1" fill="none" stroke="#de3841" stroke-width="1.2771999999999997" stroke-linecap="round" stroke-linejoin="round" /><path d="M148.3 238.001L161.6 234.499" fill="none" stroke="#de3841" stroke-width="1.2771999999999997" stroke-linecap="round" stroke-linejoin="round" /></g><circle cx="497.60" cy="231.50" r="2.10" fill="#666666" /><circle cx="506.25" cy="231.50" r="2.10" fill="#666666" /><circle cx="514.90" cy="231.50" r="2.10" fill="#666666" /><path d="M532.60 231.50H549.80M541.20 222.90V240.10" fill="none" stroke="#4a4a4a" stroke-width="2" stroke-linecap="round" stroke-linejoin="round" /><path d="M185.7 289.0V277.0Q185.7 274.0 188.7 274.0H192.72799999999998L196.22799999999998 277.6H201.878Q204.878 277.6 204.878 280.6V281.56" fill="none" stroke="#666666" stroke-width="2" stroke-linecap="round" stroke-linejoin="round" /><path d="M186.0 289.0L189.268 283.36Q189.93699999999998 281.56 191.944 281.56H205.9Q208.5 281.56 207.7 283.9L205.101 289.0Q204.432 292.0 202.648 292.0H188.7Q185.7 292.0 186.0 289.0Z" fill="none" stroke="#666666" stroke-width="2" stroke-linecap="round" stroke-linejoin="round" /><circle cx="497.60" cy="283.60" r="2.10" fill="#666666" /><circle cx="506.25" cy="283.60" r="2.10" fill="#666666" /><circle cx="514.90" cy="283.60" r="2.10" fill="#666666" /><path d="M532.60 283.60H549.80M541.20 275.00V292.20" fill="none" stroke="#4a4a4a" stroke-width="2" stroke-linecap="round" stroke-linejoin="round" /><path d="M227.3 328.732L233.28 331.238Q238.8 329.44800000000004 244.32000000000002 331.238L250.3 327.3V336.25Q249.15 339.83 241.56 343.768Q238.8 345.916 236.04000000000002 343.768Q228.45000000000002 339.83 227.3 336.25Z" fill="#636363" /><path d="M235.12 336.25Q236.04000000000002 333.744 239.26000000000002 334.46L241.56 336.25L244.78 335.176M239.26000000000002 336.608L242.48000000000002 338.756M235.12 336.25L237.42000000000002 337.324" fill="none" stroke="#fafafa" stroke-width="1.5" stroke-linecap="round" stroke-linejoin="round" /><path d="M231.068 378.23H245.192Q245.62 378.23 245.62 380.12V398.6Q242.76666666666665 395.24 239.91333333333333 398.6Q237.06 395.24 234.20666666666668 398.6Q231.35333333333335 395.24 228.5 398.6V380.54Q228.928 378.23 231.068 378.23Z" fill="#5a5a5a" /><path d="M246.048 384.32000000000005V380.96000000000004Q246.262 378.65000000000003 248.616 378.65000000000003Q249.9 379.07000000000005 249.686 382.64000000000004" fill="none" stroke="#5a5a5a" stroke-width="1.9260000000000004" stroke-linecap="round" stroke-linejoin="round" /><text x="237.06" y="392.30" font-family='"Liberation Sans", sans-serif' font-size="11.760000000000002" font-weight="700" fill="#e9e9e9" text-anchor="middle" >$</text><rect x="234.36" y="429.40" width="9.58" height="3.54" rx="1.2155000000000014" fill="#636363" /><clipPath id="tie2325_4294"><path d="M235.16 434.262H243.14000000000001L245.53400000000002 443.986Q246.33200000000002 447.08 242.07600000000002 450.174Q239.15 452.605 236.224 450.174Q231.968 447.08 232.766 443.986Z"/></clipPath><path d="M235.16 434.262H243.14000000000001L245.53400000000002 443.986Q246.33200000000002 447.08 242.07600000000002 450.174Q239.15 452.605 236.224 450.174Q231.968 447.08 232.766 443.986Z" fill="#636363" /><g clip-path="url(#tie2325_4294)"><path d="M231.5 440.56049999999993L246.8 436.8035" fill="none" stroke="#fafafa" stroke-width="1.3702000000000014" stroke-linecap="round" stroke-linejoin="round" /><path d="M231.5 444.20699999999994L246.8 440.45" fill="none" stroke="#fafafa" stroke-width="1.3702000000000014" stroke-linecap="round" stroke-linejoin="round" /><path d="M231.5 447.8535L246.8 444.09650000000005" fill="none" stroke="#fafafa" stroke-width="1.3702000000000014" stroke-linecap="round" stroke-linejoin="round" /></g><path d="M232.48000000000002 481.4H242.93L249.2 487.66999999999996V500.02Q249.2 504.2 245.01999999999998 504.2H232.48000000000002Q228.3 504.2 228.3 500.02V485.58Q228.3 481.4 232.48000000000002 481.4Z" fill="#0f8df0" /><path d="M233.525 490.976H239.168M233.525 495.08H243.975M233.525 499.18399999999997H243.975" fill="none" stroke="#ffffff" stroke-width="2.280000000000001" stroke-linecap="round" stroke-linejoin="round" /><path d="M185.7 538.4Q185.7 535.4 188.7 535.4H192.45999999999998L195.95999999999998 538.604H204.6Q207.6 538.604 207.6 541.604V550.2Q207.6 553.2 204.6 553.2H188.7Q185.7 553.2 185.7 550.2Z" fill="none" stroke="#666666" stroke-width="2" stroke-linecap="round" stroke-linejoin="round" /><path d="M185.7 542.876H207.6" fill="none" stroke="#666666" stroke-width="2" stroke-linecap="round" stroke-linejoin="round" /><path d="M190.2 589H200.7L207 595.3V607.5999999999999Q207 611.8 202.8 611.8H190.2Q186 611.8 186 607.5999999999999V593.2Q186 589 190.2 589Z" fill="#0f8df0" /><path d="M191.25 598.576H196.92M191.25 602.68H201.75M191.25 606.784H201.75" fill="none" stroke="#ffffff" stroke-width="2.2799999999999954" stroke-linecap="round" stroke-linejoin="round" /><path d="M145.60 653.40H164.40M155.00 644.00V662.80" fill="none" stroke="#8a8a8a" stroke-width="1.9" stroke-linecap="round" stroke-linejoin="round" /><path d="M137.0 1565.6V1548.896" fill="none" stroke="#666666" stroke-width="2" stroke-linecap="round" stroke-linejoin="round" /><path d="M137.0 1548.896Q142.39000000000001 1547.156 146.24 1549.07T152.4 1548.548L149.62800000000001 1553.942L152.4 1558.988Q148.55 1560.3799999999999 145.47 1558.988T137.0 1559.684Z" fill="none" stroke="#666666" stroke-width="2" stroke-linecap="round" stroke-linejoin="round" /><circle cx="1051.22" cy="33.23" r="8.43" fill="none" stroke="#858585" stroke-width="2.4" /><path d="M1057.48 39.48L1063.00 44.40" fill="none" stroke="#858585" stroke-width="2.4" stroke-linecap="round" stroke-linejoin="round" /><circle cx="1500.46" cy="28.30" r="5.80" fill="#4a78f6" opacity="0.9"/><circle cx="1509.54" cy="28.05" r="5.80" fill="#2f8ef6" opacity="0.9"/><circle cx="1512.81" cy="34.85" r="5.80" fill="#a25cf2" opacity="0.9"/><circle cx="1509.28" cy="41.15" r="5.80" fill="#ee3a9a" opacity="0.9"/><circle cx="1500.46" cy="41.15" r="5.80" fill="#f2552e" opacity="0.9"/><circle cx="1497.19" cy="34.85" r="5.80" fill="#c97ae6" opacity="0.9"/><path d="M1505 28.3Q1505.756 33.844 1511.3 34.6Q1505.756 35.356 1505 40.9Q1504.244 35.356 1498.7 34.6Q1504.244 33.844 1505 28.3Z" fill="#ffffff" stroke="#ffffff" stroke-width="1.4" stroke-linecap="round" stroke-linejoin="round" /><path d="M2232.4 32.4A10.6 10.6 0 1 0 2224.2 45" fill="none" stroke="#868686" stroke-width="2.2" stroke-linecap="round" stroke-linejoin="round" /><path d="M2216.4 34.6L2220.6 38.8L2230.2 27.6" fill="none" stroke="#868686" stroke-width="2.2" stroke-linecap="round" stroke-linejoin="round" /><path d="M2227.2 39.8H2235.6M2231.4 35.6V44" fill="none" stroke="#868686" stroke-width="2.2" stroke-linecap="round" stroke-linejoin="round" /><rect x="2256.80" y="27.60" width="21.00" height="17.00" rx="4" fill="none" stroke="#868686" stroke-width="2.2" stroke-linejoin="round" /><path d="M2263 27.4V26Q2263 24 2265 24H2269.6Q2271.6 24 2271.6 26V27.4" fill="none" stroke="#868686" stroke-width="2.2" stroke-linecap="round" stroke-linejoin="round" /><path d="M2257 33Q2267.3 39.4 2277.6 33" fill="none" stroke="#868686" stroke-width="2.2" stroke-linecap="round" stroke-linejoin="round" /><rect x="2303.50" y="25.40" width="18.50" height="19.60" rx="4" fill="none" stroke="#868686" stroke-width="2.2" stroke-linejoin="round" /><path d="M2308.6 22.8V27.4M2316.8 22.8V27.4" fill="none" stroke="#868686" stroke-width="2.8000000000000003" stroke-linecap="round" stroke-linejoin="round" /><path d="M2308 32H2317.6M2308 36H2317.6M2308 40H2313" fill="none" stroke="#868686" stroke-width="2.2" stroke-linecap="round" stroke-linejoin="round" /><rect x="2347.50" y="27.50" width="15.60" height="14.80" rx="5" fill="none" stroke="#868686" stroke-width="2.2" stroke-linejoin="round" /><path d="M2364.604 33.54L2367.3 30.479999999999997Q2368.5 29.799999999999997 2368.5 31.5V38.3Q2368.5 40.0 2367.3 39.32L2364.604 36.26" fill="none" stroke="#868686" stroke-width="2.2" stroke-linecap="round" stroke-linejoin="round" /><circle cx="2403.00" cy="35.40" r="9.00" fill="none" stroke="#868686" stroke-width="2.2" /><path d="M2403 30V35.8L2406.4 38.2" fill="none" stroke="#868686" stroke-width="2.2" stroke-linecap="round" stroke-linejoin="round" /><path d="M2393 27.4Q2393.6 24.2 2397 24M2413 27.4Q2412.4 24.2 2409 24M2396.4 43L2394.2 45.4M2409.6 43L2411.8 45.4" fill="none" stroke="#868686" stroke-width="2.2" stroke-linecap="round" stroke-linejoin="round" /><path d="M2442.2999999999997 23.700000000000003H2451.132L2457.9 30.468000000000067V41.9Q2457.9 45.1 2454.7000000000003 45.1H2442.2999999999997Q2439.1 45.1 2439.1 41.9V26.900000000000002Q2439.1 23.700000000000003 2442.2999999999997 23.700000000000003Z" fill="none" stroke="#868686" stroke-width="2.2" stroke-linecap="round" stroke-linejoin="round" /><path d="M2451.132 24.200000000000003V28.968000000000067Q2451.132 30.468000000000067 2452.632 30.468000000000067H2457.4" fill="none" stroke="#868686" stroke-width="1.87" stroke-linecap="round" stroke-linejoin="round" /><path d="M2444.176 32.688H2448.5M2444.176 36.54H2452.824M2444.176 40.392H2452.824" fill="none" stroke="#868686" stroke-width="2.2" stroke-linecap="round" stroke-linejoin="round" /><defs><clipPath id="avclip"><circle cx="2498.9" cy="35" r="21"/></clipPath></defs><g clip-path="url(#avclip)"><circle cx="2498.90" cy="35.00" r="21.00" fill="#0c0c0c" /><ellipse cx="2497.6" cy="58.5" rx="16.5" ry="13.5" fill="#e4e4e4"/><ellipse cx="2498.6" cy="44" rx="4.6" ry="4" fill="#9a9a9a"/><ellipse cx="2498.6" cy="30.6" rx="9" ry="11.6" fill="#b8b8b8"/><ellipse cx="2498.8" cy="20.2" rx="8.8" ry="4.8" fill="#7a7a7a"/><ellipse cx="2498.6" cy="38.6" rx="6.2" ry="3.4" fill="#8e8e8e"/><ellipse cx="2498.6" cy="37.4" rx="3.6" ry="1.3" fill="#e8e8e8"/><ellipse cx="2495" cy="28.6" rx="1.6" ry="0.9" fill="#555"/><ellipse cx="2502.2" cy="28.6" rx="1.6" ry="0.9" fill="#555"/></g><circle cx="2513.80" cy="49.60" r="7.40" fill="#fbfbfb" /><circle cx="2513.80" cy="49.60" r="5.60" fill="#2fa673" /><path d="M2528.10 33.50L2532.20 37.70L2536.30 33.50" fill="none" stroke="#7a7a7a" stroke-width="1.8" stroke-linecap="round" stroke-linejoin="round" /><rect x="616.50" y="97.60" width="24.30" height="24.20" rx="6.5" fill="#de3841" /><rect x="626.47" y="102.80" width="4.46" height="2.24" rx="0.77" fill="#ffffff" /><clipPath id="tie6256_1028"><path d="M626.84 105.88H630.5600000000001L631.6759999999999 112.03999999999999Q632.048 114.0 630.0640000000001 115.96Q628.7 117.5 627.336 115.96Q625.352 114.0 625.724 112.03999999999999Z"/></clipPath><path d="M626.84 105.88H630.5600000000001L631.6759999999999 112.03999999999999Q632.048 114.0 630.0640000000001 115.96Q628.7 117.5 627.336 115.96Q625.352 114.0 625.724 112.03999999999999Z" fill="#ffffff" /><g clip-path="url(#tie6256_1028)"><path d="M624.6 109.86999999999999L632.8 107.49" fill="none" stroke="#de3841" stroke-width="1.1" stroke-linecap="round" stroke-linejoin="round" /><path d="M624.6 112.17999999999999L632.8 109.8" fill="none" stroke="#de3841" stroke-width="1.1" stroke-linecap="round" stroke-linejoin="round" /><path d="M624.6 114.49L632.8 112.11" fill="none" stroke="#de3841" stroke-width="1.1" stroke-linecap="round" stroke-linejoin="round" /></g><path d="M959.8 102.6Q959.8 99.6 962.8 99.6H966.5999999999999L970.0999999999999 102.91199999999999H978.8Q981.8 102.91199999999999 981.8 105.91199999999999V115.0Q981.8 118.0 978.8 118.0H962.8Q959.8 118.0 959.8 115.0Z" fill="none" stroke="#666666" stroke-width="2" stroke-linecap="round" stroke-linejoin="round" /><path d="M959.8 107.328H981.8" fill="none" stroke="#666666" stroke-width="2" stroke-linecap="round" stroke-linejoin="round" /><path d="M1135.592 99.28999999999999H1149.848Q1150.28 99.28999999999999 1150.28 101.36V121.6Q1147.4 117.91999999999999 1144.52 121.6Q1141.6399999999999 117.91999999999999 1138.76 121.6Q1135.88 117.91999999999999 1133.0 121.6V101.82Q1133.432 99.28999999999999 1135.592 99.28999999999999Z" fill="#1f1f1f" /><path d="M1150.712 105.96V102.28Q1150.9279999999999 99.75 1153.3039999999999 99.75Q1154.6 100.21 1154.384 104.11999999999999" fill="none" stroke="#1f1f1f" stroke-width="1.9439999999999917" stroke-linecap="round" stroke-linejoin="round" /><text x="1141.64" y="114.70" font-family='"Liberation Sans", sans-serif' font-size="12.88" font-weight="700" fill="#ffffff" text-anchor="middle" >$</text><path d="M1395.55 106.95L1401.80 113.05L1408.05 106.95" fill="none" stroke="#666666" stroke-width="1.9" stroke-linecap="round" stroke-linejoin="round" /><path d="M1441.00 100.00L1444.03 107.03L1451.65 107.74L1445.90 112.79L1447.58 120.26L1441.00 116.35L1434.42 120.26L1436.10 112.79L1430.35 107.74L1437.97 107.03Z" fill="none" stroke="#666666" stroke-width="2" stroke-linecap="round" stroke-linejoin="round" /><g transform="translate(2093.80,98.20) scale(1.0000)" ><path d="M21.6 11.4V7Q21.6 1.2 15.8 1.2H7Q1.2 1.2 1.2 7V15.8Q1.2 21.6 7 21.6H11.6" fill="none" stroke="#666666" stroke-width="2.1" stroke-linecap="round" stroke-linejoin="round" /><path d="M8.4 7.6V9.6M14.4 7.6V9.6" fill="none" stroke="#666666" stroke-width="2.4" stroke-linecap="round" stroke-linejoin="round" /><path d="M7.2 13.6Q11.4 17.2 15.6 13.6" fill="none" stroke="#666666" stroke-width="2.1" stroke-linecap="round" stroke-linejoin="round" /><path d="M18.6 14.2Q19 18.2 23 18.6Q19 19 18.6 23Q18.2 19 14.2 18.6Q18.2 18.2 18.6 14.2Z" fill="#666666" stroke="#666666" stroke-width="0.6" stroke-linecap="round" stroke-linejoin="round" /></g><path d="M2251.6 98L2240.8 111.6H2247.8L2245.4 121.4L2257.6 106.8H2250.2Z" fill="#f7b32b" stroke="#f7b32b" stroke-width="1" stroke-linecap="round" stroke-linejoin="round" /><path d="M2327.5 103.57600000000001A5.2 5.2 0 1 1 2333.324 109.4A5.2 5.2 0 1 1 2327.5 115.224A5.2 5.2 0 1 1 2321.676 109.4A5.2 5.2 0 1 1 2327.5 103.57600000000001Z" fill="none" stroke="#666666" stroke-width="2.1" stroke-linecap="round" stroke-linejoin="round" /><path d="M2327.5 105.656Q2328.0616 108.83840000000001 2331.244 109.4Q2328.0616 109.9616 2327.5 113.144Q2326.9384 109.9616 2323.756 109.4Q2326.9384 108.83840000000001 2327.5 105.656Z" fill="#666666" stroke="#666666" stroke-width="0.8" stroke-linecap="round" stroke-linejoin="round" /><g transform="translate(2421.20,97.60) scale(0.8400)" ><circle cx="10.20" cy="8.30" r="5.60" fill="none" stroke="#666666" stroke-width="2.5" /><path d="M1.3 25.2Q1.3 17.2 10.2 17.2Q19.2 17.2 19.2 25.2Q19.2 27 17.4 27H3.1Q1.3 27 1.3 25.2Z" fill="none" stroke="#666666" stroke-width="2.5" stroke-linecap="round" stroke-linejoin="round" /><path d="M17 1.4Q23.2 1.6 23.4 7.6Q23.4 10.6 21 12.4Q24.4 13.4 26.2 17.2Q27.4 20.4 24.6 21.2" fill="none" stroke="#666666" stroke-width="2.5" stroke-linecap="round" stroke-linejoin="round" /></g><rect x="799.40" y="156.40" width="23.20" height="22.90" rx="5.5" fill="#7c7c7c" /><path d="M809.608 162.583H817.96" fill="none" stroke="#ffffff" stroke-width="2.8625000000000007" stroke-linecap="round" stroke-linejoin="round" /><path d="M803.808 162.583H804.736" fill="none" stroke="#ffffff" stroke-width="2.4045000000000005" stroke-linecap="round" stroke-linejoin="round" /><path d="M809.608 167.96450000000002H817.96" fill="none" stroke="#ffffff" stroke-width="2.8625000000000007" stroke-linecap="round" stroke-linejoin="round" /><path d="M803.808 167.96450000000002H804.736" fill="none" stroke="#ffffff" stroke-width="2.4045000000000005" stroke-linecap="round" stroke-linejoin="round" /><path d="M809.608 173.346H817.96" fill="none" stroke="#ffffff" stroke-width="2.8625000000000007" stroke-linecap="round" stroke-linejoin="round" /><path d="M803.808 173.346H804.736" fill="none" stroke="#ffffff" stroke-width="2.4045000000000005" stroke-linecap="round" stroke-linejoin="round" /><circle cx="823.00" cy="179.80" r="7.40" fill="#ffffff" /><path d="M823 173.8Q823.8 173.8 824.6 174.4L827.6 176.6Q828.8 177.6 828.8 179V182.6Q828.8 185.8 825.6 185.8H820.4Q817.2 185.8 817.2 182.6V179Q817.2 177.6 818.4 176.6L821.4 174.4Q822.2 173.8 823 173.8Z" fill="#7c7c7c" /><path d="M820.6 181.4Q823 183.6 825.4 181.4" fill="none" stroke="#ffffff" stroke-width="1.3" stroke-linecap="round" stroke-linejoin="round" /><rect x="955.20" y="156.40" width="22.80" height="22.90" rx="5.5" fill="#7c7c7c" /><path d="M965.232 162.583H973.44" fill="none" stroke="#ffffff" stroke-width="2.8625000000000007" stroke-linecap="round" stroke-linejoin="round" /><path d="M959.532 162.583H960.4440000000001" fill="none" stroke="#ffffff" stroke-width="2.4045000000000005" stroke-linecap="round" stroke-linejoin="round" /><path d="M965.232 167.96450000000002H973.44" fill="none" stroke="#ffffff" stroke-width="2.8625000000000007" stroke-linecap="round" stroke-linejoin="round" /><path d="M959.532 167.96450000000002H960.4440000000001" fill="none" stroke="#ffffff" stroke-width="2.4045000000000005" stroke-linecap="round" stroke-linejoin="round" /><path d="M965.232 173.346H973.44" fill="none" stroke="#ffffff" stroke-width="2.8625000000000007" stroke-linecap="round" stroke-linejoin="round" /><path d="M959.532 173.346H960.4440000000001" fill="none" stroke="#ffffff" stroke-width="2.4045000000000005" stroke-linecap="round" stroke-linejoin="round" /><rect x="1129.80" y="156.40" width="23.00" height="22.90" rx="5.5" fill="#7c7c7c" /><path d="M1139.9199999999998 162.583H1148.2" fill="none" stroke="#ffffff" stroke-width="2.8625000000000007" stroke-linecap="round" stroke-linejoin="round" /><path d="M1134.1699999999998 162.583H1135.09" fill="none" stroke="#ffffff" stroke-width="2.4045000000000005" stroke-linecap="round" stroke-linejoin="round" /><path d="M1139.9199999999998 167.96450000000002H1148.2" fill="none" stroke="#ffffff" stroke-width="2.8625000000000007" stroke-linecap="round" stroke-linejoin="round" /><path d="M1134.1699999999998 167.96450000000002H1135.09" fill="none" stroke="#ffffff" stroke-width="2.4045000000000005" stroke-linecap="round" stroke-linejoin="round" /><path d="M1139.9199999999998 173.346H1148.2" fill="none" stroke="#ffffff" stroke-width="2.8625000000000007" stroke-linecap="round" stroke-linejoin="round" /><path d="M1134.1699999999998 173.346H1135.09" fill="none" stroke="#ffffff" stroke-width="2.4045000000000005" stroke-linecap="round" stroke-linejoin="round" /><rect x="1265.80" y="156.20" width="23.20" height="23.20" rx="5.5" fill="#b648c9" /><path d="M1272.4 172.4V173.4" fill="none" stroke="#ffffff" stroke-width="3.1" stroke-linecap="round" stroke-linejoin="round" /><path d="M1277.6 167.6V173.4" fill="none" stroke="#ffffff" stroke-width="3.1" stroke-linecap="round" stroke-linejoin="round" /><path d="M1282.8 162.8V173.4" fill="none" stroke="#ffffff" stroke-width="3.1" stroke-linecap="round" stroke-linejoin="round" /><rect x="1507.80" y="156.20" width="23.00" height="23.20" rx="5.5" fill="#3aa876" /><path d="M1517.9199999999998 162.464H1526.2" fill="none" stroke="#ffffff" stroke-width="2.900000000000002" stroke-linecap="round" stroke-linejoin="round" /><path d="M1512.1699999999998 162.464H1513.09" fill="none" stroke="#ffffff" stroke-width="2.4360000000000017" stroke-linecap="round" stroke-linejoin="round" /><path d="M1517.9199999999998 167.916H1526.2" fill="none" stroke="#ffffff" stroke-width="2.900000000000002" stroke-linecap="round" stroke-linejoin="round" /><path d="M1512.1699999999998 167.916H1513.09" fill="none" stroke="#ffffff" stroke-width="2.4360000000000017" stroke-linecap="round" stroke-linejoin="round" /><path d="M1517.9199999999998 173.368H1526.2" fill="none" stroke="#ffffff" stroke-width="2.900000000000002" stroke-linecap="round" stroke-linejoin="round" /><path d="M1512.1699999999998 173.368H1513.09" fill="none" stroke="#ffffff" stroke-width="2.4360000000000017" stroke-linecap="round" stroke-linejoin="round" /><rect x="1735.90" y="156.20" width="23.10" height="23.20" rx="5.5" fill="#3f5fe0" /><rect x="1741.40" y="162.00" width="5.00" height="12.00" rx="1" fill="#ffffff" /><rect x="1748.80" y="162.00" width="5.00" height="6.20" rx="1" fill="#ffffff" /><rect x="1845.80" y="158.60" width="23.00" height="20.80" rx="5.5" fill="#f06a10" /><rect x="1850.40" y="156.40" width="3.20" height="5.60" rx="1.5" fill="#f06a10" /><rect x="1861.00" y="156.40" width="3.20" height="5.60" rx="1.5" fill="#f06a10" /><text x="1857.40" y="175.20" font-family='"Liberation Sans", sans-serif' font-size="12.5" font-weight="700" fill="#ffffff" text-anchor="middle" >31</text><path d="M794.24 154.34L795.44 153.14L796.93 154.62L799.26 151.44L798.48 150.66L799.90 149.25L805.55 154.90L804.14 156.32L803.36 155.54L800.18 157.87L801.66 159.36L800.46 160.56Z" fill="#ffffff" stroke="#ffffff" stroke-width="3.4" stroke-linecap="round" stroke-linejoin="round" /><path d="M794.24 154.34L795.44 153.14L796.93 154.62L799.26 151.44L798.48 150.66L799.90 149.25L805.55 154.90L804.14 156.32L803.36 155.54L800.18 157.87L801.66 159.36L800.46 160.56Z" fill="#8a8a8a" stroke="#8a8a8a" stroke-width="1.2" stroke-linecap="round" stroke-linejoin="round" /><path d="M792.40 162.40L797.49 157.31" fill="none" stroke="#8a8a8a" stroke-width="1.5" stroke-linecap="round" stroke-linejoin="round" /><path d="M950.04 154.34L951.24 153.14L952.73 154.62L955.06 151.44L954.28 150.66L955.70 149.25L961.35 154.90L959.94 156.32L959.16 155.54L955.98 157.87L957.46 159.36L956.26 160.56Z" fill="#ffffff" stroke="#ffffff" stroke-width="3.4" stroke-linecap="round" stroke-linejoin="round" /><path d="M950.04 154.34L951.24 153.14L952.73 154.62L955.06 151.44L954.28 150.66L955.70 149.25L961.35 154.90L959.94 156.32L959.16 155.54L955.98 157.87L957.46 159.36L956.26 160.56Z" fill="#8a8a8a" stroke="#8a8a8a" stroke-width="1.2" stroke-linecap="round" stroke-linejoin="round" /><path d="M948.20 162.40L953.29 157.31" fill="none" stroke="#8a8a8a" stroke-width="1.5" stroke-linecap="round" stroke-linejoin="round" /><path d="M1124.64 154.34L1125.84 153.14L1127.33 154.62L1129.66 151.44L1128.88 150.66L1130.30 149.25L1135.95 154.90L1134.54 156.32L1133.76 155.54L1130.58 157.87L1132.06 159.36L1130.86 160.56Z" fill="#ffffff" stroke="#ffffff" stroke-width="3.4" stroke-linecap="round" stroke-linejoin="round" /><path d="M1124.64 154.34L1125.84 153.14L1127.33 154.62L1129.66 151.44L1128.88 150.66L1130.30 149.25L1135.95 154.90L1134.54 156.32L1133.76 155.54L1130.58 157.87L1132.06 159.36L1130.86 160.56Z" fill="#8a8a8a" stroke="#8a8a8a" stroke-width="1.2" stroke-linecap="round" stroke-linejoin="round" /><path d="M1122.80 162.40L1127.89 157.31" fill="none" stroke="#8a8a8a" stroke-width="1.5" stroke-linecap="round" stroke-linejoin="round" /><path d="M1261.04 154.34L1262.24 153.14L1263.73 154.62L1266.06 151.44L1265.28 150.66L1266.70 149.25L1272.35 154.90L1270.94 156.32L1270.16 155.54L1266.98 157.87L1268.46 159.36L1267.26 160.56Z" fill="#ffffff" stroke="#ffffff" stroke-width="3.4" stroke-linecap="round" stroke-linejoin="round" /><path d="M1261.04 154.34L1262.24 153.14L1263.73 154.62L1266.06 151.44L1265.28 150.66L1266.70 149.25L1272.35 154.90L1270.94 156.32L1270.16 155.54L1266.98 157.87L1268.46 159.36L1267.26 160.56Z" fill="#8a8a8a" stroke="#8a8a8a" stroke-width="1.2" stroke-linecap="round" stroke-linejoin="round" /><path d="M1259.20 162.40L1264.29 157.31" fill="none" stroke="#8a8a8a" stroke-width="1.5" stroke-linecap="round" stroke-linejoin="round" /><path d="M1503.04 154.34L1504.24 153.14L1505.73 154.62L1508.06 151.44L1507.28 150.66L1508.70 149.25L1514.35 154.90L1512.94 156.32L1512.16 155.54L1508.98 157.87L1510.46 159.36L1509.26 160.56Z" fill="#ffffff" stroke="#ffffff" stroke-width="3.4" stroke-linecap="round" stroke-linejoin="round" /><path d="M1503.04 154.34L1504.24 153.14L1505.73 154.62L1508.06 151.44L1507.28 150.66L1508.70 149.25L1514.35 154.90L1512.94 156.32L1512.16 155.54L1508.98 157.87L1510.46 159.36L1509.26 160.56Z" fill="#8a8a8a" stroke="#8a8a8a" stroke-width="1.2" stroke-linecap="round" stroke-linejoin="round" /><path d="M1501.20 162.40L1506.29 157.31" fill="none" stroke="#8a8a8a" stroke-width="1.5" stroke-linecap="round" stroke-linejoin="round" /><path d="M1730.64 154.34L1731.84 153.14L1733.33 154.62L1735.66 151.44L1734.88 150.66L1736.30 149.25L1741.95 154.90L1740.54 156.32L1739.76 155.54L1736.58 157.87L1738.06 159.36L1736.86 160.56Z" fill="#ffffff" stroke="#ffffff" stroke-width="3.4" stroke-linecap="round" stroke-linejoin="round" /><path d="M1730.64 154.34L1731.84 153.14L1733.33 154.62L1735.66 151.44L1734.88 150.66L1736.30 149.25L1741.95 154.90L1740.54 156.32L1739.76 155.54L1736.58 157.87L1738.06 159.36L1736.86 160.56Z" fill="#8a8a8a" stroke="#8a8a8a" stroke-width="1.2" stroke-linecap="round" stroke-linejoin="round" /><path d="M1728.80 162.40L1733.89 157.31" fill="none" stroke="#8a8a8a" stroke-width="1.5" stroke-linecap="round" stroke-linejoin="round" /><path d="M1840.44 154.34L1841.64 153.14L1843.13 154.62L1845.46 151.44L1844.68 150.66L1846.10 149.25L1851.75 154.90L1850.34 156.32L1849.56 155.54L1846.38 157.87L1847.86 159.36L1846.66 160.56Z" fill="#ffffff" stroke="#ffffff" stroke-width="3.4" stroke-linecap="round" stroke-linejoin="round" /><path d="M1840.44 154.34L1841.64 153.14L1843.13 154.62L1845.46 151.44L1844.68 150.66L1846.10 149.25L1851.75 154.90L1850.34 156.32L1849.56 155.54L1846.38 157.87L1847.86 159.36L1846.66 160.56Z" fill="#8a8a8a" stroke="#8a8a8a" stroke-width="1.2" stroke-linecap="round" stroke-linejoin="round" /><path d="M1838.60 162.40L1843.69 157.31" fill="none" stroke="#8a8a8a" stroke-width="1.5" stroke-linecap="round" stroke-linejoin="round" /><path d="M2123.00 168.20H2140.20M2131.60 159.60V176.80" fill="none" stroke="#666666" stroke-width="2" stroke-linecap="round" stroke-linejoin="round" /><path d="M624.6 233.6H646.6M628.6 240.2H642.6M632.8000000000001 246.79999999999998H638.4" fill="none" stroke="#7a7a7a" stroke-width="2.1" stroke-linecap="round" stroke-linejoin="round" /><path d="M1339 229.2Q1344 229.8 1347.4 229.2Q1349.4 229.2 1349.4 231.4V240Q1349.4 247 1339 251Q1328.4 247 1328.4 240V231.4Q1328.4 229.2 1330.4 229.2Q1334 229.8 1339 229.2Z" fill="none" stroke="#7a7a7a" stroke-width="2.1" stroke-linecap="round" stroke-linejoin="round" /><path d="M1334 239.6L1337.6 243.2L1344.2 235.6" fill="none" stroke="#7a7a7a" stroke-width="2.1" stroke-linecap="round" stroke-linejoin="round" /><path d="M1538.608 238.28A9.6 9.6 0 0 0 1521.328 234.82399999999998" fill="none" stroke="#7a7a7a" stroke-width="2.1" stroke-linecap="round" stroke-linejoin="round" /><path d="M1519.7920000000001 242.11999999999998A9.6 9.6 0 0 0 1537.0720000000001 245.576" fill="none" stroke="#7a7a7a" stroke-width="2.1" stroke-linecap="round" stroke-linejoin="round" /><path d="M1538.992 231.07999999999998V238.28H1532.0800000000002" fill="none" stroke="#7a7a7a" stroke-width="2.1" stroke-linecap="round" stroke-linejoin="round" /><path d="M1519.4080000000001 249.32V242.11999999999998H1526.32" fill="none" stroke="#7a7a7a" stroke-width="2.1" stroke-linecap="round" stroke-linejoin="round" /><circle cx="1828.60" cy="240.20" r="10.70" fill="none" stroke="#5a42d6" stroke-width="2.1" /><path d="M1828.6 233.4V240.4H1823.4" fill="none" stroke="#5a42d6" stroke-width="2.1" stroke-linecap="round" stroke-linejoin="round" /><path d="M2071.6 236V232.6Q2071.6 228.8 2067.8 228.8H2053.6Q2049.8 228.8 2049.8 232.6V246.8Q2049.8 250.6 2053.6 250.6H2060" fill="none" stroke="#7a7a7a" stroke-width="2.1" stroke-linecap="round" stroke-linejoin="round" /><path d="M2055.4 241V245M2060 237.6V245M2064.6 234.4V240" fill="none" stroke="#7a7a7a" stroke-width="2.1" stroke-linecap="round" stroke-linejoin="round" /><path d="M2069.8 238.2L2063.4 246.2H2067.6L2066 252.4L2073.4 243.6H2068.8Z" fill="#f7b32b" stroke="#f7b32b" stroke-width="0.8" stroke-linecap="round" stroke-linejoin="round" /><path d="M668.8 683.2L678.6 687.8L668.8 692.4L659 687.8Z" fill="none" stroke="#5a42d6" stroke-width="2.1" stroke-linecap="round" stroke-linejoin="round" /><path d="M659.4 692.6L668.8 697L678.2 692.6" fill="none" stroke="#5a42d6" stroke-width="2.1" stroke-linecap="round" stroke-linejoin="round" /><path d="M659.4 697.4L668.8 701.8L678.2 697.4" fill="none" stroke="#5a42d6" stroke-width="2.1" stroke-linecap="round" stroke-linejoin="round" /><circle cx="858.40" cy="687.00" r="2.90" fill="none" stroke="#7a7a7a" stroke-width="1.9" /><circle cx="870.80" cy="698.80" r="2.90" fill="none" stroke="#7a7a7a" stroke-width="1.9" /><path d="M858.4 690V694.4Q858.4 698.8 862.8 698.8H867.8" fill="none" stroke="#7a7a7a" stroke-width="1.9" stroke-linecap="round" stroke-linejoin="round" /><rect x="1010.00" y="683.40" width="18.60" height="19.00" rx="3.4" fill="none" stroke="#7a7a7a" stroke-width="2" stroke-linejoin="round" /><path d="M1016.2 683.4V702.4M1022.4 683.4V702.4" fill="none" stroke="#7a7a7a" stroke-width="2" stroke-linecap="round" stroke-linejoin="round" /><path d="M2145.6 686.6H2165M2149.6 692.8H2161M2153.4 699H2157.2" fill="none" stroke="#5a42d6" stroke-width="2.1" stroke-linecap="round" stroke-linejoin="round" /><circle cx="2284.60" cy="692.80" r="8.80" fill="none" stroke="#7a7a7a" stroke-width="2" /><path d="M2280.4 693L2283.4 696L2289 689.6" fill="none" stroke="#7a7a7a" stroke-width="2" stroke-linecap="round" stroke-linejoin="round" /><circle cx="2434.45" cy="691.45" r="8.30" fill="none" stroke="#1f1f1f" stroke-width="2.3" /><path d="M2440.62 697.62L2445.45 702.45" fill="none" stroke="#1f1f1f" stroke-width="2.3" stroke-linecap="round" stroke-linejoin="round" /><path d="M2483.25 685.16L2483.48 682.69L2486.12 682.69L2486.35 685.16L2489.11 686.30L2491.02 684.71L2492.89 686.58L2491.30 688.49L2492.44 691.25L2494.91 691.48L2494.91 694.12L2492.44 694.35L2491.30 697.11L2492.89 699.02L2491.02 700.89L2489.11 699.30L2486.35 700.44L2486.12 702.91L2483.48 702.91L2483.25 700.44L2480.49 699.30L2478.58 700.89L2476.71 699.02L2478.30 697.11L2477.16 694.35L2474.69 694.12L2474.69 691.48L2477.16 691.25L2478.30 688.49L2476.71 686.58L2478.58 684.71L2480.49 686.30Z" fill="none" stroke="#4a4a4a" stroke-width="2" stroke-linecap="round" stroke-linejoin="round" /><circle cx="2484.80" cy="692.80" r="3.40" fill="none" stroke="#4a4a4a" stroke-width="2" /><path d="M652.6 793.8H664.8L659.5 800.6Q658.7 801.6 657.9 800.6Z" fill="#6a6a6a" stroke="#6a6a6a" stroke-width="1.2" stroke-linecap="round" stroke-linejoin="round" /><rect x="710.82" y="786.60" width="9.36" height="3.55" rx="1.2209999999999963" fill="#6a6a6a" /><clipPath id="tie7090_7866"><path d="M711.6 791.484H719.4L721.74 801.252Q722.52 804.36 718.36 807.468Q715.5 809.91 712.64 807.468Q708.48 804.36 709.26 801.252Z"/></clipPath><path d="M711.6 791.484H719.4L721.74 801.252Q722.52 804.36 718.36 807.468Q715.5 809.91 712.64 807.468Q708.48 804.36 709.26 801.252Z" fill="#6a6a6a" /><g clip-path="url(#tie7090_7866)"><path d="M708 797.8109999999999L723 794.037" fill="none" stroke="#ededed" stroke-width="1.3763999999999958" stroke-linecap="round" stroke-linejoin="round" /><path d="M708 801.4739999999999L723 797.7" fill="none" stroke="#ededed" stroke-width="1.3763999999999958" stroke-linecap="round" stroke-linejoin="round" /><path d="M708 805.137L723 801.363" fill="none" stroke="#ededed" stroke-width="1.3763999999999958" stroke-linecap="round" stroke-linejoin="round" /></g><circle cx="894.40" cy="797.60" r="2.00" fill="#7a7a7a" /><circle cx="903.20" cy="797.60" r="2.00" fill="#7a7a7a" /><circle cx="912.00" cy="797.60" r="2.00" fill="#7a7a7a" /><path d="M936.00 797.60H953.20M944.60 789.00V806.20" fill="none" stroke="#7a7a7a" stroke-width="2" stroke-linecap="round" stroke-linejoin="round" /><path d="M692.064 902.26H706.716Q707.16 902.26 707.16 904.24V923.6Q704.2 920.08 701.24 923.6Q698.28 920.08 695.3199999999999 923.6Q692.3599999999999 920.08 689.4 923.6V904.6800000000001Q689.8439999999999 902.26 692.064 902.26Z" fill="#686868" /><path d="M707.6039999999999 908.64V905.12Q707.826 902.7 710.268 902.7Q711.6 903.14 711.378 906.88" fill="none" stroke="#686868" stroke-width="1.998000000000004" stroke-linecap="round" stroke-linejoin="round" /><text x="698.28" y="917.00" font-family='"Liberation Sans", sans-serif' font-size="12.32" font-weight="700" fill="#ffffff" text-anchor="middle" >$</text><path d="M1272.8 904.2H1290.8M1272.8 922H1290.8M1275 904.4Q1275 910 1281.8 913.1Q1288.6 910 1288.6 904.4M1275 921.8Q1275 916.2 1281.8 913.1Q1288.6 916.2 1288.6 921.8" fill="none" stroke="#6a6a6a" stroke-width="2" stroke-linecap="round" stroke-linejoin="round" /><circle cx="1506.40" cy="912.60" r="13.40" fill="#b4b4b4" /><circle cx="1506.40" cy="912.60" r="9.00" fill="#d6d6d6" /><path d="M1502.8 907.4L1512 912.6L1502.8 917.8Z" fill="#ffffff" stroke="#ffffff" stroke-width="1.2" stroke-linecap="round" stroke-linejoin="round" /><g transform="translate(1753.60,901.00) scale(0.8000)" ><path d="M13.4 1.2Q19.4 1.2 19.4 7.6Q19.4 11.2 16.6 13.4Q19.6 14.4 21.6 17" fill="none" stroke="#7a7a7a" stroke-width="2.3749999999999996" stroke-linecap="round" stroke-linejoin="round" /><path d="M13.4 1.2Q7.4 1.2 7.4 7.6Q7.4 11.2 10 13.6Q4.6 15.4 2 21.6Q0 27.2 5.4 27.4H13.6" fill="none" stroke="#7a7a7a" stroke-width="2.3749999999999996" stroke-linecap="round" stroke-linejoin="round" /><path d="M17.2 23.6H26.4M21.8 19V28.2" fill="none" stroke="#7a7a7a" stroke-width="2.3749999999999996" stroke-linecap="round" stroke-linejoin="round" /></g><path d="M1980.6 915V909.2Q1980.6 905.2 1976.6 905.2H1963.2Q1959.2 905.2 1959.2 909.2V919.6Q1959.2 923.6 1963.2 923.6H1969" fill="none" stroke="#7a7a7a" stroke-width="2.1" stroke-linecap="round" stroke-linejoin="round" /><path d="M1959.4 908.6H1980.4" fill="none" stroke="#7a7a7a" stroke-width="3" stroke-linecap="round" stroke-linejoin="round" /><path d="M1964.8 902.2V905.6M1975 902.2V905.6" fill="none" stroke="#7a7a7a" stroke-width="2.4" stroke-linecap="round" stroke-linejoin="round" /><path d="M1971.8 920H1981.4M1976.6 915.2V924.8" fill="none" stroke="#7a7a7a" stroke-width="2.1" stroke-linecap="round" stroke-linejoin="round" /><path d="M2164.4 922.0V902.9920000000001" fill="none" stroke="#3b5bdb" stroke-width="2" stroke-linecap="round" stroke-linejoin="round" /><path d="M2164.4 902.9920000000001Q2170.77 901.0120000000001 2175.32 903.19T2182.6 902.596L2179.324 908.734L2182.6 914.476Q2178.05 916.0600000000001 2174.41 914.476T2164.4 915.268Z" fill="#3b5bdb" stroke="#3b5bdb" stroke-width="2" stroke-linecap="round" stroke-linejoin="round" /><circle cx="2411.60" cy="912.40" r="10.40" fill="none" stroke="#8a8a8a" stroke-width="2.6" stroke-dasharray="4.6 3.57"/><path d="M691.20 975.50H708.80M700.00 966.70V984.30" fill="none" stroke="#7a7a7a" stroke-width="1.9" stroke-linecap="round" stroke-linejoin="round" /></svg>
</div></body></html>
